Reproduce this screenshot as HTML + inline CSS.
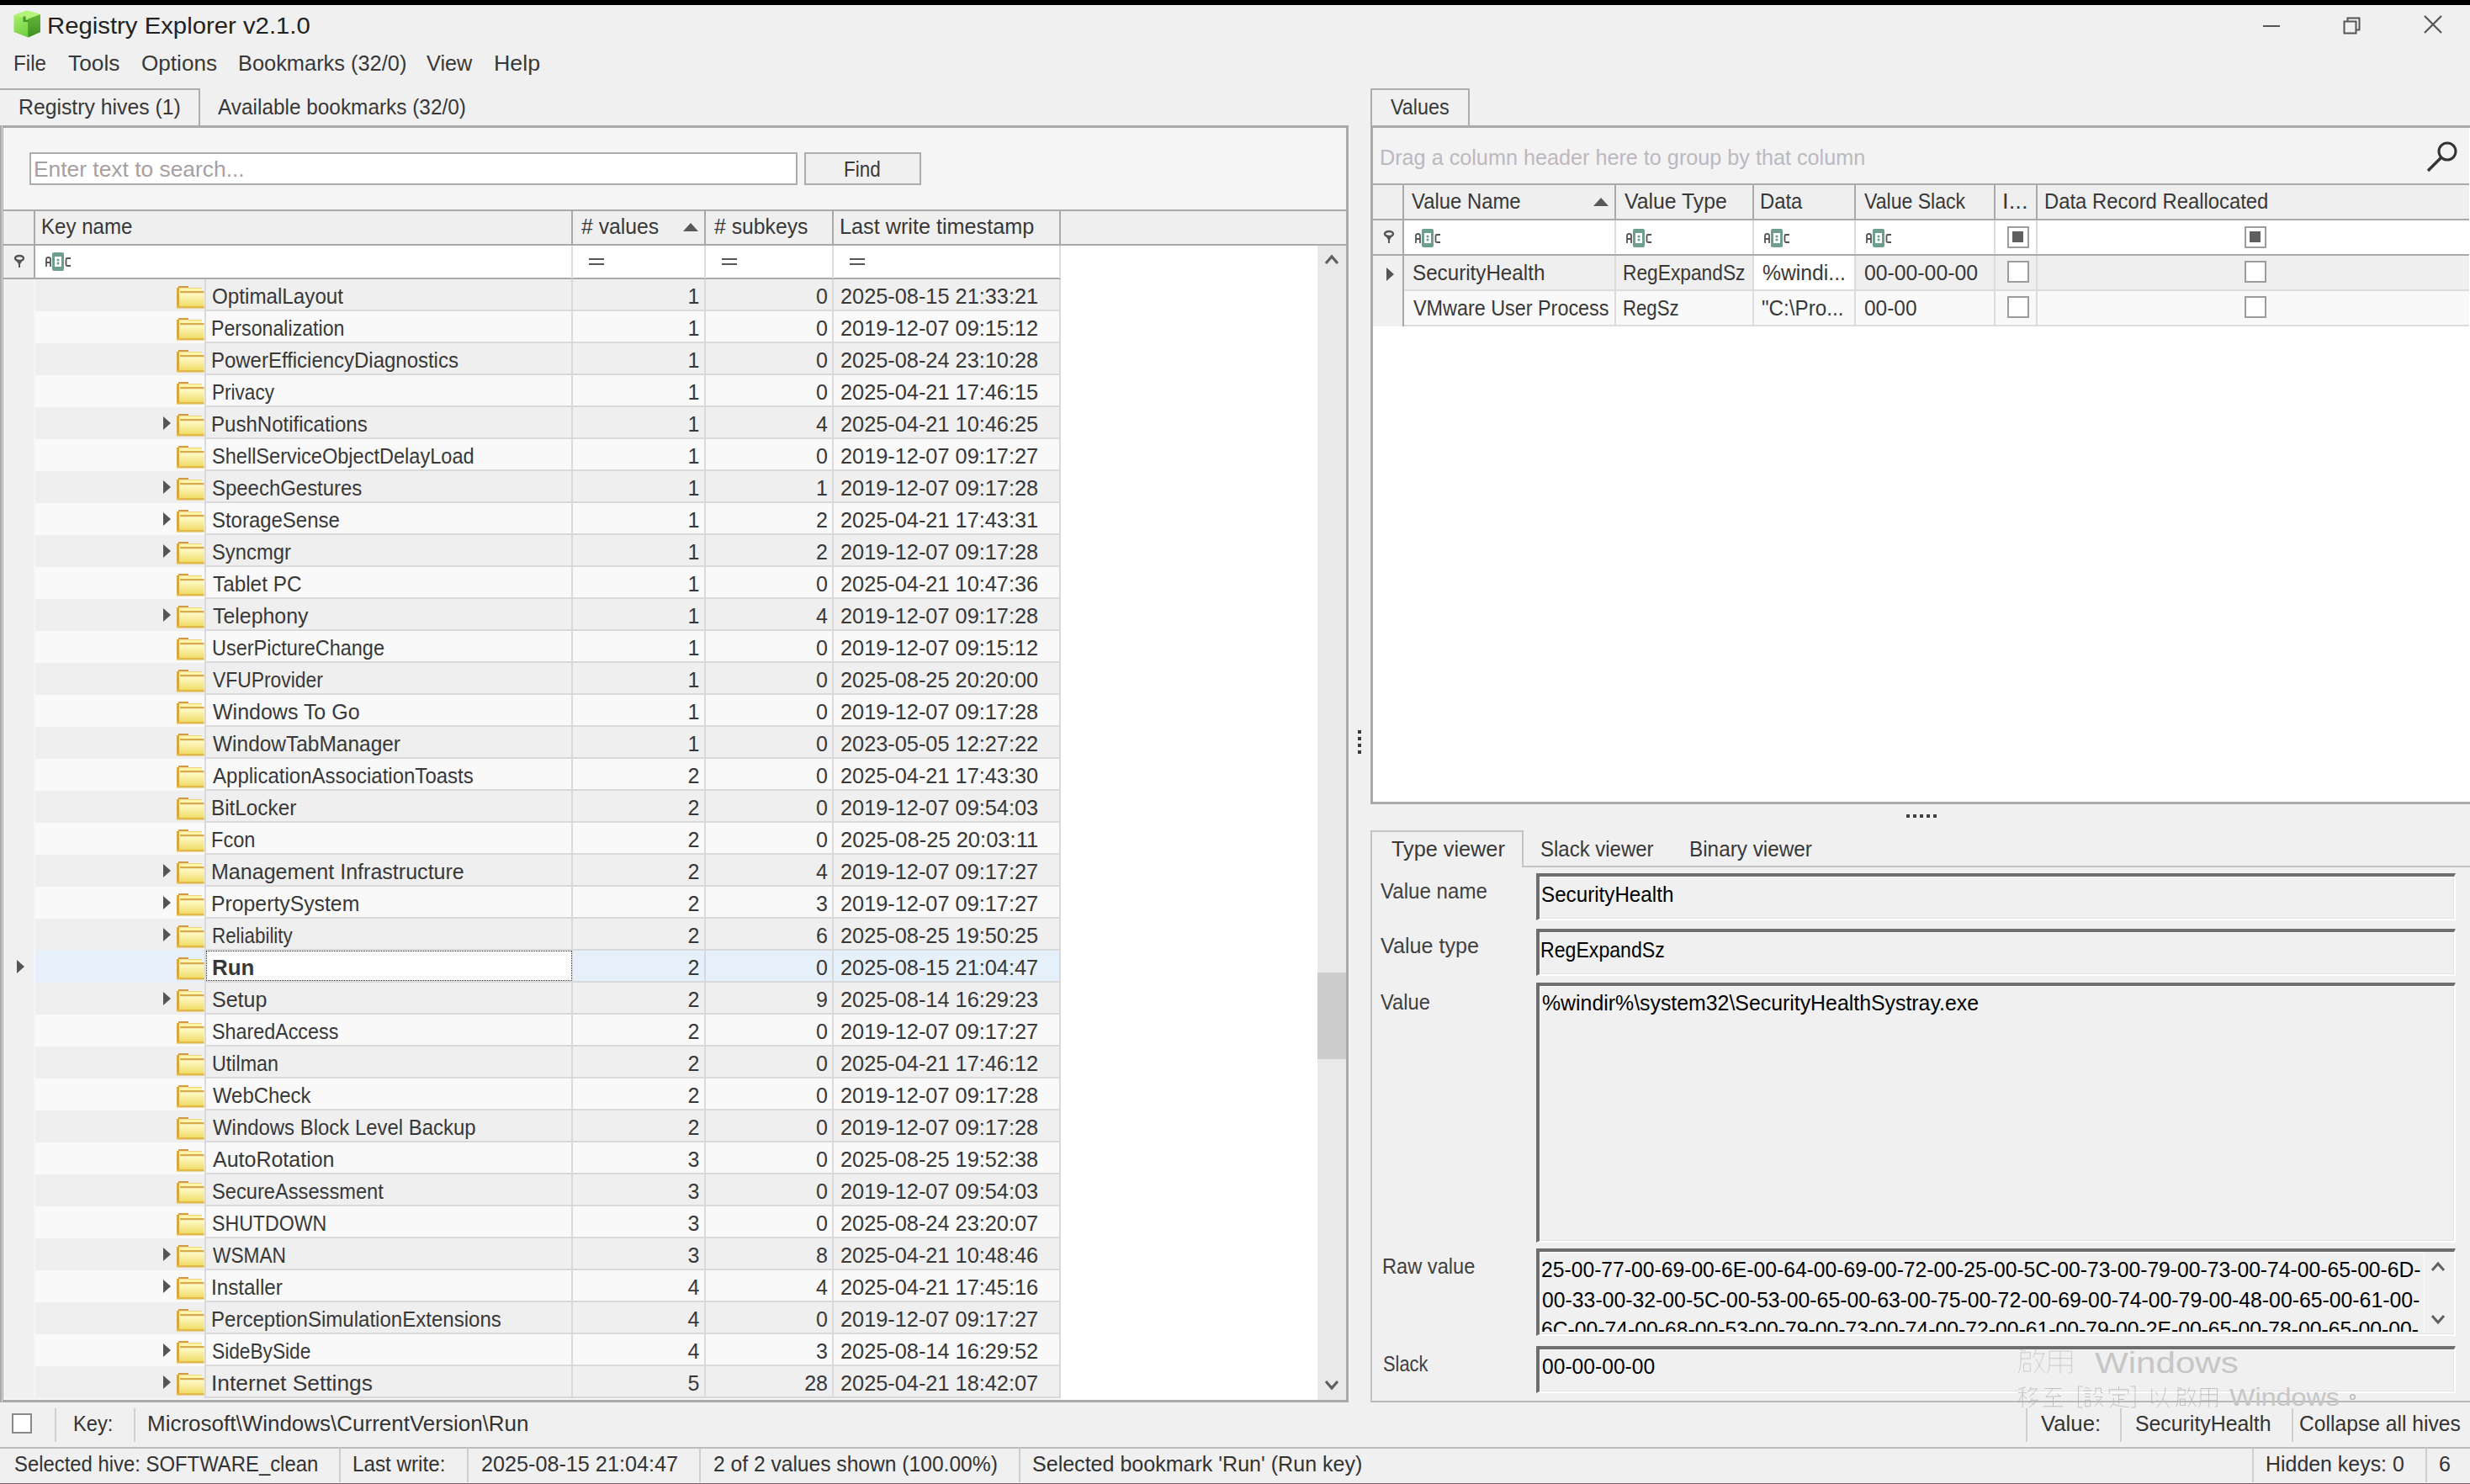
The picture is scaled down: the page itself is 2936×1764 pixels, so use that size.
<!DOCTYPE html>
<html><head><meta charset="utf-8"><title>Registry Explorer</title>
<style>
html,body{margin:0;padding:0;}
body{width:2936px;height:1764px;position:relative;overflow:hidden;background:#f0f0f0;font-family:"Liberation Sans",sans-serif;}
.a{position:absolute;box-sizing:content-box;}
svg.a{overflow:visible;}
.t{position:absolute;white-space:pre;font-family:"Liberation Sans",sans-serif;}
</style></head><body>
<div class="a" style="left:0px;top:0px;width:2936px;height:6px;background:#000;"></div>
<svg class="a" style="left:15px;top:11px;" width="36" height="36" viewBox="0 0 36 36">
<defs><linearGradient id="g1" x1="0" y1="0" x2="0.6" y2="1"><stop offset="0" stop-color="#b0f76a"/><stop offset="1" stop-color="#6cc840"/></linearGradient>
<linearGradient id="g2" x1="0" y1="0" x2="0" y2="1"><stop offset="0" stop-color="#62b838"/><stop offset="1" stop-color="#3f8f25"/></linearGradient></defs>
<path d="M1.5 7 L17 1.5 L33 6 L33 27 L18.5 33.5 L1.5 27 Z" fill="url(#g1)"/>
<path d="M18 11.5 L33 6 L33 27 L18.5 33.5 Z" fill="url(#g2)"/>
<path d="M1.5 7 L17 1.5 L33 6 L18 11.5 Z" fill="#b4f47c"/>
<path d="M12.5 8.5 L15.5 8.5 L15.5 13 L18.5 13 L18.5 15 L12.5 15 Z" fill="#3d8422" opacity="0.85"/>
</svg>
<div class="t " style="left:55.64px;top:15.870000000000001px;font-size:28.5px;line-height:28.5px;color:#222;font-weight:normal;transform:scaleX(1.0286);transform-origin:0 0;">Registry Explorer v2.1.0</div>
<div class="a" style="left:2690px;top:30px;width:20px;height:2px;background:#555;"></div>
<svg class="a" style="left:2784px;top:19px;" width="24" height="24" viewBox="0 0 24 24"><rect x="2.5" y="6.5" width="14" height="14" fill="none" stroke="#555" stroke-width="2"/><path d="M6.5 6.5 V2.5 H20.5 V16.5 H16.5" fill="none" stroke="#555" stroke-width="2"/></svg>
<svg class="a" style="left:2880px;top:17px;" width="24" height="24" viewBox="0 0 24 24"><path d="M2 2 L22 22 M22 2 L2 22" stroke="#555" stroke-width="2.2"/></svg>
<div class="t " style="left:15.66px;top:62.84px;font-size:25px;line-height:25px;color:#383838;font-weight:normal;transform:scaleX(0.9684);transform-origin:0 0;">File</div>
<div class="t " style="left:80.80px;top:62.84px;font-size:25px;line-height:25px;color:#383838;font-weight:normal;transform:scaleX(1.0525);transform-origin:0 0;">Tools</div>
<div class="t " style="left:168.46px;top:62.84px;font-size:25px;line-height:25px;color:#383838;font-weight:normal;transform:scaleX(1.0442);transform-origin:0 0;">Options</div>
<div class="t " style="left:282.77px;top:62.84px;font-size:25px;line-height:25px;color:#383838;font-weight:normal;transform:scaleX(1.0156);transform-origin:0 0;">Bookmarks (32/0)</div>
<div class="t " style="left:507.30px;top:62.84px;font-size:25px;line-height:25px;color:#383838;font-weight:normal;transform:scaleX(1.0095);transform-origin:0 0;">View</div>
<div class="t " style="left:586.86px;top:62.84px;font-size:25px;line-height:25px;color:#383838;font-weight:normal;transform:scaleX(1.0719);transform-origin:0 0;">Help</div>
<div class="a" style="left:0px;top:105px;width:236px;height:46px;border:2px solid #adadad;border-bottom:none;border-left:none;background:#f0f0f0"></div>
<div class="t " style="left:22.32px;top:114.84px;font-size:25px;line-height:25px;color:#383838;font-weight:normal;transform:scaleX(0.9913);transform-origin:0 0;">Registry hives (1)</div>
<div class="t " style="left:259.00px;top:114.84px;font-size:25px;line-height:25px;color:#383838;font-weight:normal;transform:scaleX(0.9750);transform-origin:0 0;">Available bookmarks (32/0)</div>
<div class="a" style="left:0px;top:149px;width:1600px;height:1512px;border:3px solid #a9a9a9;border-left:none;background:#f5f5f5"></div>
<div class="a" style="left:0px;top:149px;width:2px;height:1518px;background:#a9a9a9;"></div>
<div class="a" style="left:2px;top:149px;width:1px;height:1518px;background:#dcdcdc;"></div>
<div class="a" style="left:3px;top:149px;width:1px;height:1518px;background:#a9a9a9;"></div>
<div class="a" style="left:35px;top:181px;width:909px;height:35px;border:2px solid #acacac;background:#fff"></div>
<div class="t " style="left:40.39px;top:188.84px;font-size:25px;line-height:25px;color:#a8a0a0;font-weight:normal;transform:scaleX(1.0549);transform-origin:0 0;">Enter text to search...</div>
<div class="a" style="left:956px;top:181px;width:135px;height:35px;border:2px solid #adadad;background:#f0f0f0"></div>
<div class="t " style="left:1003.21px;top:188.84px;font-size:25px;line-height:25px;color:#383838;font-weight:normal;transform:scaleX(0.8966);transform-origin:0 0;">Find</div>
<div class="a" style="left:4px;top:249px;width:1596px;height:2px;background:#a9a9a9;"></div>
<div class="a" style="left:4px;top:251px;width:1596px;height:40px;background:#efefef;"></div>
<div class="a" style="left:4px;top:290px;width:1596px;height:2px;background:#a9a9a9;"></div>
<div class="a" style="left:40px;top:251px;width:2px;height:40px;background:#a9a9a9;"></div>
<div class="a" style="left:679px;top:251px;width:2px;height:40px;background:#a9a9a9;"></div>
<div class="a" style="left:837px;top:251px;width:2px;height:40px;background:#a9a9a9;"></div>
<div class="a" style="left:989px;top:251px;width:2px;height:40px;background:#a9a9a9;"></div>
<div class="a" style="left:1259px;top:251px;width:2px;height:40px;background:#a9a9a9;"></div>
<div class="t " style="left:49.07px;top:256.84px;font-size:25px;line-height:25px;color:#383838;font-weight:normal;transform:scaleX(0.9639);transform-origin:0 0;">Key name</div>
<div class="t " style="left:691.00px;top:256.84px;font-size:25px;line-height:25px;color:#383838;font-weight:normal;transform:scaleX(0.9901);transform-origin:0 0;"># values</div>
<svg class="a" style="left:812px;top:264px;" width="18" height="12" viewBox="0 0 18 12"><path d="M0 11 L9 1 L18 11 Z" fill="#595959"/></svg>
<div class="t " style="left:849.40px;top:256.84px;font-size:25px;line-height:25px;color:#383838;font-weight:normal;transform:scaleX(0.9896);transform-origin:0 0;"># subkeys</div>
<div class="t " style="left:997.98px;top:256.84px;font-size:25px;line-height:25px;color:#383838;font-weight:normal;transform:scaleX(1.0087);transform-origin:0 0;">Last write timestamp</div>
<div class="a" style="left:4px;top:292px;width:36px;height:39px;background:#f0f0f0;"></div>
<div class="a" style="left:42px;top:292px;width:1219px;height:39px;background:#fff;"></div>
<div class="a" style="left:1261px;top:292px;width:305px;height:1372px;background:#fff;"></div>
<div class="a" style="left:4px;top:330px;width:1257px;height:2px;background:#a9a9a9;"></div>
<div class="a" style="left:40px;top:292px;width:2px;height:39px;background:#a9a9a9;"></div>
<div class="a" style="left:679px;top:292px;width:2px;height:39px;background:#dcdcdc;"></div>
<div class="a" style="left:837px;top:292px;width:2px;height:39px;background:#dcdcdc;"></div>
<div class="a" style="left:989px;top:292px;width:2px;height:39px;background:#dcdcdc;"></div>
<div class="a" style="left:1259px;top:292px;width:2px;height:39px;background:#dcdcdc;"></div>
<svg class="a" style="left:17px;top:303px;" width="12" height="16" viewBox="0 0 12 16"><ellipse cx="6" cy="4" rx="5" ry="3" fill="none" stroke="#555" stroke-width="2.4"/><path d="M2 6 L10 6 L7 11 L7 15 L5 15 L5 11 Z" fill="#555"/></svg>
<svg class="a" style="left:54px;top:300px;" width="32" height="23" viewBox="0 0 32 23"><path d="M1 17 V8 Q1 6 3.5 6 Q6 6 6 8 V17 M1 12 H6" fill="none" stroke="#555" stroke-width="1.8"/><rect x="8" y="0" width="14" height="22" rx="2" fill="#6e9f8c"/><rect x="11" y="5" width="8" height="12" fill="#fff"/><circle cx="15" cy="9" r="1.6" fill="#6e9f8c"/><circle cx="15" cy="13" r="1.6" fill="#6e9f8c"/><path d="M30 7 H26 Q24.5 7 24.5 8.5 V14.5 Q24.5 16 26 16 H30" fill="none" stroke="#555" stroke-width="1.8"/></svg>
<div class="a" style="left:700px;top:307px;width:18px;height:2px;background:#555;"></div>
<div class="a" style="left:700px;top:313px;width:18px;height:2px;background:#555;"></div>
<div class="a" style="left:858px;top:307px;width:18px;height:2px;background:#555;"></div>
<div class="a" style="left:858px;top:313px;width:18px;height:2px;background:#555;"></div>
<div class="a" style="left:1010px;top:307px;width:18px;height:2px;background:#555;"></div>
<div class="a" style="left:1010px;top:313px;width:18px;height:2px;background:#555;"></div>
<div class="a" style="left:42px;top:332px;width:1219px;height:38px;background:#efefef;"></div>
<div class="a" style="left:4px;top:332px;width:36px;height:38px;background:#f0f0f0;"></div>
<div class="a" style="left:243px;top:368px;width:1018px;height:2px;background:#d9d9d9;"></div>
<div class="a" style="left:243px;top:332px;width:2px;height:38px;background:#d9d9d9;"></div>
<div class="a" style="left:679px;top:332px;width:2px;height:38px;background:#d9d9d9;"></div>
<div class="a" style="left:837px;top:332px;width:2px;height:38px;background:#d9d9d9;"></div>
<div class="a" style="left:989px;top:332px;width:2px;height:38px;background:#d9d9d9;"></div>
<div class="a" style="left:1259px;top:332px;width:2px;height:38px;background:#d9d9d9;"></div>
<svg class="a" style="left:210px;top:340px;" width="33" height="27" viewBox="0 0 33 27"><defs><linearGradient id="fg" x1="0" y1="0" x2="0" y2="1"><stop offset="0" stop-color="#fffbc4"/><stop offset="0.45" stop-color="#f8eca0"/><stop offset="1" stop-color="#f0dc62"/></linearGradient></defs>
<rect x="0" y="2" width="3" height="24" fill="#d9a640"/>
<rect x="2" y="0" width="12" height="2.5" fill="#cf9c45"/>
<rect x="14" y="2" width="16" height="2.5" fill="#dcb050"/>
<rect x="3" y="2.5" width="27" height="5" fill="#fff5a8"/>
<rect x="4" y="6" width="28.5" height="2.5" fill="#d8aa4c"/>
<rect x="3" y="8.5" width="29.5" height="16" fill="url(#fg)"/>
<rect x="0" y="24" width="32.5" height="2.5" fill="#e2b84a"/></svg>
<div class="t " style="left:252.33px;top:339.84px;font-size:25px;line-height:25px;color:#383838;font-weight:normal;transform:scaleX(0.9679);transform-origin:0 0;">OptimalLayout</div>
<div class="t" style="right:2104.5px;top:339.84px;font-size:25px;line-height:25px;color:#383838;text-align:right;">1</div>
<div class="t" style="right:1952px;top:339.84px;font-size:25px;line-height:25px;color:#383838;text-align:right;">0</div>
<div class="t " style="left:999.49px;top:339.84px;font-size:25px;line-height:25px;color:#383838;font-weight:normal;transform:scaleX(1.0129);transform-origin:0 0;">2025-08-15 21:33:21</div>
<div class="a" style="left:42px;top:370px;width:1219px;height:38px;background:#f9f9f9;"></div>
<div class="a" style="left:4px;top:370px;width:36px;height:38px;background:#f0f0f0;"></div>
<div class="a" style="left:243px;top:406px;width:1018px;height:2px;background:#d9d9d9;"></div>
<div class="a" style="left:243px;top:370px;width:2px;height:38px;background:#d9d9d9;"></div>
<div class="a" style="left:679px;top:370px;width:2px;height:38px;background:#d9d9d9;"></div>
<div class="a" style="left:837px;top:370px;width:2px;height:38px;background:#d9d9d9;"></div>
<div class="a" style="left:989px;top:370px;width:2px;height:38px;background:#d9d9d9;"></div>
<div class="a" style="left:1259px;top:370px;width:2px;height:38px;background:#d9d9d9;"></div>
<svg class="a" style="left:210px;top:378px;" width="33" height="27" viewBox="0 0 33 27"><defs><linearGradient id="fg" x1="0" y1="0" x2="0" y2="1"><stop offset="0" stop-color="#fffbc4"/><stop offset="0.45" stop-color="#f8eca0"/><stop offset="1" stop-color="#f0dc62"/></linearGradient></defs>
<rect x="0" y="2" width="3" height="24" fill="#d9a640"/>
<rect x="2" y="0" width="12" height="2.5" fill="#cf9c45"/>
<rect x="14" y="2" width="16" height="2.5" fill="#dcb050"/>
<rect x="3" y="2.5" width="27" height="5" fill="#fff5a8"/>
<rect x="4" y="6" width="28.5" height="2.5" fill="#d8aa4c"/>
<rect x="3" y="8.5" width="29.5" height="16" fill="url(#fg)"/>
<rect x="0" y="24" width="32.5" height="2.5" fill="#e2b84a"/></svg>
<div class="t " style="left:251.45px;top:377.84px;font-size:25px;line-height:25px;color:#383838;font-weight:normal;transform:scaleX(0.9272);transform-origin:0 0;">Personalization</div>
<div class="t" style="right:2104.5px;top:377.84px;font-size:25px;line-height:25px;color:#383838;text-align:right;">1</div>
<div class="t" style="right:1952px;top:377.84px;font-size:25px;line-height:25px;color:#383838;text-align:right;">0</div>
<div class="t " style="left:999.49px;top:377.84px;font-size:25px;line-height:25px;color:#383838;font-weight:normal;transform:scaleX(1.0129);transform-origin:0 0;">2019-12-07 09:15:12</div>
<div class="a" style="left:42px;top:408px;width:1219px;height:38px;background:#efefef;"></div>
<div class="a" style="left:4px;top:408px;width:36px;height:38px;background:#f0f0f0;"></div>
<div class="a" style="left:243px;top:444px;width:1018px;height:2px;background:#d9d9d9;"></div>
<div class="a" style="left:243px;top:408px;width:2px;height:38px;background:#d9d9d9;"></div>
<div class="a" style="left:679px;top:408px;width:2px;height:38px;background:#d9d9d9;"></div>
<div class="a" style="left:837px;top:408px;width:2px;height:38px;background:#d9d9d9;"></div>
<div class="a" style="left:989px;top:408px;width:2px;height:38px;background:#d9d9d9;"></div>
<div class="a" style="left:1259px;top:408px;width:2px;height:38px;background:#d9d9d9;"></div>
<svg class="a" style="left:210px;top:416px;" width="33" height="27" viewBox="0 0 33 27"><defs><linearGradient id="fg" x1="0" y1="0" x2="0" y2="1"><stop offset="0" stop-color="#fffbc4"/><stop offset="0.45" stop-color="#f8eca0"/><stop offset="1" stop-color="#f0dc62"/></linearGradient></defs>
<rect x="0" y="2" width="3" height="24" fill="#d9a640"/>
<rect x="2" y="0" width="12" height="2.5" fill="#cf9c45"/>
<rect x="14" y="2" width="16" height="2.5" fill="#dcb050"/>
<rect x="3" y="2.5" width="27" height="5" fill="#fff5a8"/>
<rect x="4" y="6" width="28.5" height="2.5" fill="#d8aa4c"/>
<rect x="3" y="8.5" width="29.5" height="16" fill="url(#fg)"/>
<rect x="0" y="24" width="32.5" height="2.5" fill="#e2b84a"/></svg>
<div class="t " style="left:251.38px;top:415.84px;font-size:25px;line-height:25px;color:#383838;font-weight:normal;transform:scaleX(0.9585);transform-origin:0 0;">PowerEfficiencyDiagnostics</div>
<div class="t" style="right:2104.5px;top:415.84px;font-size:25px;line-height:25px;color:#383838;text-align:right;">1</div>
<div class="t" style="right:1952px;top:415.84px;font-size:25px;line-height:25px;color:#383838;text-align:right;">0</div>
<div class="t " style="left:999.49px;top:415.84px;font-size:25px;line-height:25px;color:#383838;font-weight:normal;transform:scaleX(1.0129);transform-origin:0 0;">2025-08-24 23:10:28</div>
<div class="a" style="left:42px;top:446px;width:1219px;height:38px;background:#f9f9f9;"></div>
<div class="a" style="left:4px;top:446px;width:36px;height:38px;background:#f0f0f0;"></div>
<div class="a" style="left:243px;top:482px;width:1018px;height:2px;background:#d9d9d9;"></div>
<div class="a" style="left:243px;top:446px;width:2px;height:38px;background:#d9d9d9;"></div>
<div class="a" style="left:679px;top:446px;width:2px;height:38px;background:#d9d9d9;"></div>
<div class="a" style="left:837px;top:446px;width:2px;height:38px;background:#d9d9d9;"></div>
<div class="a" style="left:989px;top:446px;width:2px;height:38px;background:#d9d9d9;"></div>
<div class="a" style="left:1259px;top:446px;width:2px;height:38px;background:#d9d9d9;"></div>
<svg class="a" style="left:210px;top:454px;" width="33" height="27" viewBox="0 0 33 27"><defs><linearGradient id="fg" x1="0" y1="0" x2="0" y2="1"><stop offset="0" stop-color="#fffbc4"/><stop offset="0.45" stop-color="#f8eca0"/><stop offset="1" stop-color="#f0dc62"/></linearGradient></defs>
<rect x="0" y="2" width="3" height="24" fill="#d9a640"/>
<rect x="2" y="0" width="12" height="2.5" fill="#cf9c45"/>
<rect x="14" y="2" width="16" height="2.5" fill="#dcb050"/>
<rect x="3" y="2.5" width="27" height="5" fill="#fff5a8"/>
<rect x="4" y="6" width="28.5" height="2.5" fill="#d8aa4c"/>
<rect x="3" y="8.5" width="29.5" height="16" fill="url(#fg)"/>
<rect x="0" y="24" width="32.5" height="2.5" fill="#e2b84a"/></svg>
<div class="t " style="left:251.50px;top:453.84px;font-size:25px;line-height:25px;color:#383838;font-weight:normal;transform:scaleX(0.9023);transform-origin:0 0;">Privacy</div>
<div class="t" style="right:2104.5px;top:453.84px;font-size:25px;line-height:25px;color:#383838;text-align:right;">1</div>
<div class="t" style="right:1952px;top:453.84px;font-size:25px;line-height:25px;color:#383838;text-align:right;">0</div>
<div class="t " style="left:999.49px;top:453.84px;font-size:25px;line-height:25px;color:#383838;font-weight:normal;transform:scaleX(1.0129);transform-origin:0 0;">2025-04-21 17:46:15</div>
<div class="a" style="left:42px;top:484px;width:1219px;height:38px;background:#efefef;"></div>
<div class="a" style="left:4px;top:484px;width:36px;height:38px;background:#f0f0f0;"></div>
<div class="a" style="left:243px;top:520px;width:1018px;height:2px;background:#d9d9d9;"></div>
<div class="a" style="left:243px;top:484px;width:2px;height:38px;background:#d9d9d9;"></div>
<div class="a" style="left:679px;top:484px;width:2px;height:38px;background:#d9d9d9;"></div>
<div class="a" style="left:837px;top:484px;width:2px;height:38px;background:#d9d9d9;"></div>
<div class="a" style="left:989px;top:484px;width:2px;height:38px;background:#d9d9d9;"></div>
<div class="a" style="left:1259px;top:484px;width:2px;height:38px;background:#d9d9d9;"></div>
<svg class="a" style="left:194px;top:495px;" width="9" height="16" viewBox="0 0 9 16"><path d="M0 0 L9 8 L0 16 Z" fill="#555"/></svg>
<svg class="a" style="left:210px;top:492px;" width="33" height="27" viewBox="0 0 33 27"><defs><linearGradient id="fg" x1="0" y1="0" x2="0" y2="1"><stop offset="0" stop-color="#fffbc4"/><stop offset="0.45" stop-color="#f8eca0"/><stop offset="1" stop-color="#f0dc62"/></linearGradient></defs>
<rect x="0" y="2" width="3" height="24" fill="#d9a640"/>
<rect x="2" y="0" width="12" height="2.5" fill="#cf9c45"/>
<rect x="14" y="2" width="16" height="2.5" fill="#dcb050"/>
<rect x="3" y="2.5" width="27" height="5" fill="#fff5a8"/>
<rect x="4" y="6" width="28.5" height="2.5" fill="#d8aa4c"/>
<rect x="3" y="8.5" width="29.5" height="16" fill="url(#fg)"/>
<rect x="0" y="24" width="32.5" height="2.5" fill="#e2b84a"/></svg>
<div class="t " style="left:251.38px;top:491.84px;font-size:25px;line-height:25px;color:#383838;font-weight:normal;transform:scaleX(0.9614);transform-origin:0 0;">PushNotifications</div>
<div class="t" style="right:2104.5px;top:491.84px;font-size:25px;line-height:25px;color:#383838;text-align:right;">1</div>
<div class="t" style="right:1952px;top:491.84px;font-size:25px;line-height:25px;color:#383838;text-align:right;">4</div>
<div class="t " style="left:999.49px;top:491.84px;font-size:25px;line-height:25px;color:#383838;font-weight:normal;transform:scaleX(1.0129);transform-origin:0 0;">2025-04-21 10:46:25</div>
<div class="a" style="left:42px;top:522px;width:1219px;height:38px;background:#f9f9f9;"></div>
<div class="a" style="left:4px;top:522px;width:36px;height:38px;background:#f0f0f0;"></div>
<div class="a" style="left:243px;top:558px;width:1018px;height:2px;background:#d9d9d9;"></div>
<div class="a" style="left:243px;top:522px;width:2px;height:38px;background:#d9d9d9;"></div>
<div class="a" style="left:679px;top:522px;width:2px;height:38px;background:#d9d9d9;"></div>
<div class="a" style="left:837px;top:522px;width:2px;height:38px;background:#d9d9d9;"></div>
<div class="a" style="left:989px;top:522px;width:2px;height:38px;background:#d9d9d9;"></div>
<div class="a" style="left:1259px;top:522px;width:2px;height:38px;background:#d9d9d9;"></div>
<svg class="a" style="left:210px;top:530px;" width="33" height="27" viewBox="0 0 33 27"><defs><linearGradient id="fg" x1="0" y1="0" x2="0" y2="1"><stop offset="0" stop-color="#fffbc4"/><stop offset="0.45" stop-color="#f8eca0"/><stop offset="1" stop-color="#f0dc62"/></linearGradient></defs>
<rect x="0" y="2" width="3" height="24" fill="#d9a640"/>
<rect x="2" y="0" width="12" height="2.5" fill="#cf9c45"/>
<rect x="14" y="2" width="16" height="2.5" fill="#dcb050"/>
<rect x="3" y="2.5" width="27" height="5" fill="#fff5a8"/>
<rect x="4" y="6" width="28.5" height="2.5" fill="#d8aa4c"/>
<rect x="3" y="8.5" width="29.5" height="16" fill="url(#fg)"/>
<rect x="0" y="24" width="32.5" height="2.5" fill="#e2b84a"/></svg>
<div class="t " style="left:252.36px;top:529.84px;font-size:25px;line-height:25px;color:#383838;font-weight:normal;transform:scaleX(0.9421);transform-origin:0 0;">ShellServiceObjectDelayLoad</div>
<div class="t" style="right:2104.5px;top:529.84px;font-size:25px;line-height:25px;color:#383838;text-align:right;">1</div>
<div class="t" style="right:1952px;top:529.84px;font-size:25px;line-height:25px;color:#383838;text-align:right;">0</div>
<div class="t " style="left:999.49px;top:529.84px;font-size:25px;line-height:25px;color:#383838;font-weight:normal;transform:scaleX(1.0129);transform-origin:0 0;">2019-12-07 09:17:27</div>
<div class="a" style="left:42px;top:560px;width:1219px;height:38px;background:#efefef;"></div>
<div class="a" style="left:4px;top:560px;width:36px;height:38px;background:#f0f0f0;"></div>
<div class="a" style="left:243px;top:596px;width:1018px;height:2px;background:#d9d9d9;"></div>
<div class="a" style="left:243px;top:560px;width:2px;height:38px;background:#d9d9d9;"></div>
<div class="a" style="left:679px;top:560px;width:2px;height:38px;background:#d9d9d9;"></div>
<div class="a" style="left:837px;top:560px;width:2px;height:38px;background:#d9d9d9;"></div>
<div class="a" style="left:989px;top:560px;width:2px;height:38px;background:#d9d9d9;"></div>
<div class="a" style="left:1259px;top:560px;width:2px;height:38px;background:#d9d9d9;"></div>
<svg class="a" style="left:194px;top:571px;" width="9" height="16" viewBox="0 0 9 16"><path d="M0 0 L9 8 L0 16 Z" fill="#555"/></svg>
<svg class="a" style="left:210px;top:568px;" width="33" height="27" viewBox="0 0 33 27"><defs><linearGradient id="fg" x1="0" y1="0" x2="0" y2="1"><stop offset="0" stop-color="#fffbc4"/><stop offset="0.45" stop-color="#f8eca0"/><stop offset="1" stop-color="#f0dc62"/></linearGradient></defs>
<rect x="0" y="2" width="3" height="24" fill="#d9a640"/>
<rect x="2" y="0" width="12" height="2.5" fill="#cf9c45"/>
<rect x="14" y="2" width="16" height="2.5" fill="#dcb050"/>
<rect x="3" y="2.5" width="27" height="5" fill="#fff5a8"/>
<rect x="4" y="6" width="28.5" height="2.5" fill="#d8aa4c"/>
<rect x="3" y="8.5" width="29.5" height="16" fill="url(#fg)"/>
<rect x="0" y="24" width="32.5" height="2.5" fill="#e2b84a"/></svg>
<div class="t " style="left:252.34px;top:567.84px;font-size:25px;line-height:25px;color:#383838;font-weight:normal;transform:scaleX(0.9577);transform-origin:0 0;">SpeechGestures</div>
<div class="t" style="right:2104.5px;top:567.84px;font-size:25px;line-height:25px;color:#383838;text-align:right;">1</div>
<div class="t" style="right:1952px;top:567.84px;font-size:25px;line-height:25px;color:#383838;text-align:right;">1</div>
<div class="t " style="left:999.49px;top:567.84px;font-size:25px;line-height:25px;color:#383838;font-weight:normal;transform:scaleX(1.0129);transform-origin:0 0;">2019-12-07 09:17:28</div>
<div class="a" style="left:42px;top:598px;width:1219px;height:38px;background:#f9f9f9;"></div>
<div class="a" style="left:4px;top:598px;width:36px;height:38px;background:#f0f0f0;"></div>
<div class="a" style="left:243px;top:634px;width:1018px;height:2px;background:#d9d9d9;"></div>
<div class="a" style="left:243px;top:598px;width:2px;height:38px;background:#d9d9d9;"></div>
<div class="a" style="left:679px;top:598px;width:2px;height:38px;background:#d9d9d9;"></div>
<div class="a" style="left:837px;top:598px;width:2px;height:38px;background:#d9d9d9;"></div>
<div class="a" style="left:989px;top:598px;width:2px;height:38px;background:#d9d9d9;"></div>
<div class="a" style="left:1259px;top:598px;width:2px;height:38px;background:#d9d9d9;"></div>
<svg class="a" style="left:194px;top:609px;" width="9" height="16" viewBox="0 0 9 16"><path d="M0 0 L9 8 L0 16 Z" fill="#555"/></svg>
<svg class="a" style="left:210px;top:606px;" width="33" height="27" viewBox="0 0 33 27"><defs><linearGradient id="fg" x1="0" y1="0" x2="0" y2="1"><stop offset="0" stop-color="#fffbc4"/><stop offset="0.45" stop-color="#f8eca0"/><stop offset="1" stop-color="#f0dc62"/></linearGradient></defs>
<rect x="0" y="2" width="3" height="24" fill="#d9a640"/>
<rect x="2" y="0" width="12" height="2.5" fill="#cf9c45"/>
<rect x="14" y="2" width="16" height="2.5" fill="#dcb050"/>
<rect x="3" y="2.5" width="27" height="5" fill="#fff5a8"/>
<rect x="4" y="6" width="28.5" height="2.5" fill="#d8aa4c"/>
<rect x="3" y="8.5" width="29.5" height="16" fill="url(#fg)"/>
<rect x="0" y="24" width="32.5" height="2.5" fill="#e2b84a"/></svg>
<div class="t " style="left:252.34px;top:605.84px;font-size:25px;line-height:25px;color:#383838;font-weight:normal;transform:scaleX(0.9576);transform-origin:0 0;">StorageSense</div>
<div class="t" style="right:2104.5px;top:605.84px;font-size:25px;line-height:25px;color:#383838;text-align:right;">1</div>
<div class="t" style="right:1952px;top:605.84px;font-size:25px;line-height:25px;color:#383838;text-align:right;">2</div>
<div class="t " style="left:999.49px;top:605.84px;font-size:25px;line-height:25px;color:#383838;font-weight:normal;transform:scaleX(1.0129);transform-origin:0 0;">2025-04-21 17:43:31</div>
<div class="a" style="left:42px;top:636px;width:1219px;height:38px;background:#efefef;"></div>
<div class="a" style="left:4px;top:636px;width:36px;height:38px;background:#f0f0f0;"></div>
<div class="a" style="left:243px;top:672px;width:1018px;height:2px;background:#d9d9d9;"></div>
<div class="a" style="left:243px;top:636px;width:2px;height:38px;background:#d9d9d9;"></div>
<div class="a" style="left:679px;top:636px;width:2px;height:38px;background:#d9d9d9;"></div>
<div class="a" style="left:837px;top:636px;width:2px;height:38px;background:#d9d9d9;"></div>
<div class="a" style="left:989px;top:636px;width:2px;height:38px;background:#d9d9d9;"></div>
<div class="a" style="left:1259px;top:636px;width:2px;height:38px;background:#d9d9d9;"></div>
<svg class="a" style="left:194px;top:647px;" width="9" height="16" viewBox="0 0 9 16"><path d="M0 0 L9 8 L0 16 Z" fill="#555"/></svg>
<svg class="a" style="left:210px;top:644px;" width="33" height="27" viewBox="0 0 33 27"><defs><linearGradient id="fg" x1="0" y1="0" x2="0" y2="1"><stop offset="0" stop-color="#fffbc4"/><stop offset="0.45" stop-color="#f8eca0"/><stop offset="1" stop-color="#f0dc62"/></linearGradient></defs>
<rect x="0" y="2" width="3" height="24" fill="#d9a640"/>
<rect x="2" y="0" width="12" height="2.5" fill="#cf9c45"/>
<rect x="14" y="2" width="16" height="2.5" fill="#dcb050"/>
<rect x="3" y="2.5" width="27" height="5" fill="#fff5a8"/>
<rect x="4" y="6" width="28.5" height="2.5" fill="#d8aa4c"/>
<rect x="3" y="8.5" width="29.5" height="16" fill="url(#fg)"/>
<rect x="0" y="24" width="32.5" height="2.5" fill="#e2b84a"/></svg>
<div class="t " style="left:252.35px;top:643.84px;font-size:25px;line-height:25px;color:#383838;font-weight:normal;transform:scaleX(0.9516);transform-origin:0 0;">Syncmgr</div>
<div class="t" style="right:2104.5px;top:643.84px;font-size:25px;line-height:25px;color:#383838;text-align:right;">1</div>
<div class="t" style="right:1952px;top:643.84px;font-size:25px;line-height:25px;color:#383838;text-align:right;">2</div>
<div class="t " style="left:999.49px;top:643.84px;font-size:25px;line-height:25px;color:#383838;font-weight:normal;transform:scaleX(1.0129);transform-origin:0 0;">2019-12-07 09:17:28</div>
<div class="a" style="left:42px;top:674px;width:1219px;height:38px;background:#f9f9f9;"></div>
<div class="a" style="left:4px;top:674px;width:36px;height:38px;background:#f0f0f0;"></div>
<div class="a" style="left:243px;top:710px;width:1018px;height:2px;background:#d9d9d9;"></div>
<div class="a" style="left:243px;top:674px;width:2px;height:38px;background:#d9d9d9;"></div>
<div class="a" style="left:679px;top:674px;width:2px;height:38px;background:#d9d9d9;"></div>
<div class="a" style="left:837px;top:674px;width:2px;height:38px;background:#d9d9d9;"></div>
<div class="a" style="left:989px;top:674px;width:2px;height:38px;background:#d9d9d9;"></div>
<div class="a" style="left:1259px;top:674px;width:2px;height:38px;background:#d9d9d9;"></div>
<svg class="a" style="left:210px;top:682px;" width="33" height="27" viewBox="0 0 33 27"><defs><linearGradient id="fg" x1="0" y1="0" x2="0" y2="1"><stop offset="0" stop-color="#fffbc4"/><stop offset="0.45" stop-color="#f8eca0"/><stop offset="1" stop-color="#f0dc62"/></linearGradient></defs>
<rect x="0" y="2" width="3" height="24" fill="#d9a640"/>
<rect x="2" y="0" width="12" height="2.5" fill="#cf9c45"/>
<rect x="14" y="2" width="16" height="2.5" fill="#dcb050"/>
<rect x="3" y="2.5" width="27" height="5" fill="#fff5a8"/>
<rect x="4" y="6" width="28.5" height="2.5" fill="#d8aa4c"/>
<rect x="3" y="8.5" width="29.5" height="16" fill="url(#fg)"/>
<rect x="0" y="24" width="32.5" height="2.5" fill="#e2b84a"/></svg>
<div class="t " style="left:253.30px;top:681.84px;font-size:25px;line-height:25px;color:#383838;font-weight:normal;transform:scaleX(0.9729);transform-origin:0 0;">Tablet PC</div>
<div class="t" style="right:2104.5px;top:681.84px;font-size:25px;line-height:25px;color:#383838;text-align:right;">1</div>
<div class="t" style="right:1952px;top:681.84px;font-size:25px;line-height:25px;color:#383838;text-align:right;">0</div>
<div class="t " style="left:999.49px;top:681.84px;font-size:25px;line-height:25px;color:#383838;font-weight:normal;transform:scaleX(1.0129);transform-origin:0 0;">2025-04-21 10:47:36</div>
<div class="a" style="left:42px;top:712px;width:1219px;height:38px;background:#efefef;"></div>
<div class="a" style="left:4px;top:712px;width:36px;height:38px;background:#f0f0f0;"></div>
<div class="a" style="left:243px;top:748px;width:1018px;height:2px;background:#d9d9d9;"></div>
<div class="a" style="left:243px;top:712px;width:2px;height:38px;background:#d9d9d9;"></div>
<div class="a" style="left:679px;top:712px;width:2px;height:38px;background:#d9d9d9;"></div>
<div class="a" style="left:837px;top:712px;width:2px;height:38px;background:#d9d9d9;"></div>
<div class="a" style="left:989px;top:712px;width:2px;height:38px;background:#d9d9d9;"></div>
<div class="a" style="left:1259px;top:712px;width:2px;height:38px;background:#d9d9d9;"></div>
<svg class="a" style="left:194px;top:723px;" width="9" height="16" viewBox="0 0 9 16"><path d="M0 0 L9 8 L0 16 Z" fill="#555"/></svg>
<svg class="a" style="left:210px;top:720px;" width="33" height="27" viewBox="0 0 33 27"><defs><linearGradient id="fg" x1="0" y1="0" x2="0" y2="1"><stop offset="0" stop-color="#fffbc4"/><stop offset="0.45" stop-color="#f8eca0"/><stop offset="1" stop-color="#f0dc62"/></linearGradient></defs>
<rect x="0" y="2" width="3" height="24" fill="#d9a640"/>
<rect x="2" y="0" width="12" height="2.5" fill="#cf9c45"/>
<rect x="14" y="2" width="16" height="2.5" fill="#dcb050"/>
<rect x="3" y="2.5" width="27" height="5" fill="#fff5a8"/>
<rect x="4" y="6" width="28.5" height="2.5" fill="#d8aa4c"/>
<rect x="3" y="8.5" width="29.5" height="16" fill="url(#fg)"/>
<rect x="0" y="24" width="32.5" height="2.5" fill="#e2b84a"/></svg>
<div class="t " style="left:253.30px;top:719.84px;font-size:25px;line-height:25px;color:#383838;font-weight:normal;transform:scaleX(0.9950);transform-origin:0 0;">Telephony</div>
<div class="t" style="right:2104.5px;top:719.84px;font-size:25px;line-height:25px;color:#383838;text-align:right;">1</div>
<div class="t" style="right:1952px;top:719.84px;font-size:25px;line-height:25px;color:#383838;text-align:right;">4</div>
<div class="t " style="left:999.49px;top:719.84px;font-size:25px;line-height:25px;color:#383838;font-weight:normal;transform:scaleX(1.0129);transform-origin:0 0;">2019-12-07 09:17:28</div>
<div class="a" style="left:42px;top:750px;width:1219px;height:38px;background:#f9f9f9;"></div>
<div class="a" style="left:4px;top:750px;width:36px;height:38px;background:#f0f0f0;"></div>
<div class="a" style="left:243px;top:786px;width:1018px;height:2px;background:#d9d9d9;"></div>
<div class="a" style="left:243px;top:750px;width:2px;height:38px;background:#d9d9d9;"></div>
<div class="a" style="left:679px;top:750px;width:2px;height:38px;background:#d9d9d9;"></div>
<div class="a" style="left:837px;top:750px;width:2px;height:38px;background:#d9d9d9;"></div>
<div class="a" style="left:989px;top:750px;width:2px;height:38px;background:#d9d9d9;"></div>
<div class="a" style="left:1259px;top:750px;width:2px;height:38px;background:#d9d9d9;"></div>
<svg class="a" style="left:210px;top:758px;" width="33" height="27" viewBox="0 0 33 27"><defs><linearGradient id="fg" x1="0" y1="0" x2="0" y2="1"><stop offset="0" stop-color="#fffbc4"/><stop offset="0.45" stop-color="#f8eca0"/><stop offset="1" stop-color="#f0dc62"/></linearGradient></defs>
<rect x="0" y="2" width="3" height="24" fill="#d9a640"/>
<rect x="2" y="0" width="12" height="2.5" fill="#cf9c45"/>
<rect x="14" y="2" width="16" height="2.5" fill="#dcb050"/>
<rect x="3" y="2.5" width="27" height="5" fill="#fff5a8"/>
<rect x="4" y="6" width="28.5" height="2.5" fill="#d8aa4c"/>
<rect x="3" y="8.5" width="29.5" height="16" fill="url(#fg)"/>
<rect x="0" y="24" width="32.5" height="2.5" fill="#e2b84a"/></svg>
<div class="t " style="left:252.36px;top:757.84px;font-size:25px;line-height:25px;color:#383838;font-weight:normal;transform:scaleX(0.9396);transform-origin:0 0;">UserPictureChange</div>
<div class="t" style="right:2104.5px;top:757.84px;font-size:25px;line-height:25px;color:#383838;text-align:right;">1</div>
<div class="t" style="right:1952px;top:757.84px;font-size:25px;line-height:25px;color:#383838;text-align:right;">0</div>
<div class="t " style="left:999.49px;top:757.84px;font-size:25px;line-height:25px;color:#383838;font-weight:normal;transform:scaleX(1.0129);transform-origin:0 0;">2019-12-07 09:15:12</div>
<div class="a" style="left:42px;top:788px;width:1219px;height:38px;background:#efefef;"></div>
<div class="a" style="left:4px;top:788px;width:36px;height:38px;background:#f0f0f0;"></div>
<div class="a" style="left:243px;top:824px;width:1018px;height:2px;background:#d9d9d9;"></div>
<div class="a" style="left:243px;top:788px;width:2px;height:38px;background:#d9d9d9;"></div>
<div class="a" style="left:679px;top:788px;width:2px;height:38px;background:#d9d9d9;"></div>
<div class="a" style="left:837px;top:788px;width:2px;height:38px;background:#d9d9d9;"></div>
<div class="a" style="left:989px;top:788px;width:2px;height:38px;background:#d9d9d9;"></div>
<div class="a" style="left:1259px;top:788px;width:2px;height:38px;background:#d9d9d9;"></div>
<svg class="a" style="left:210px;top:796px;" width="33" height="27" viewBox="0 0 33 27"><defs><linearGradient id="fg" x1="0" y1="0" x2="0" y2="1"><stop offset="0" stop-color="#fffbc4"/><stop offset="0.45" stop-color="#f8eca0"/><stop offset="1" stop-color="#f0dc62"/></linearGradient></defs>
<rect x="0" y="2" width="3" height="24" fill="#d9a640"/>
<rect x="2" y="0" width="12" height="2.5" fill="#cf9c45"/>
<rect x="14" y="2" width="16" height="2.5" fill="#dcb050"/>
<rect x="3" y="2.5" width="27" height="5" fill="#fff5a8"/>
<rect x="4" y="6" width="28.5" height="2.5" fill="#d8aa4c"/>
<rect x="3" y="8.5" width="29.5" height="16" fill="url(#fg)"/>
<rect x="0" y="24" width="32.5" height="2.5" fill="#e2b84a"/></svg>
<div class="t " style="left:253.30px;top:795.84px;font-size:25px;line-height:25px;color:#383838;font-weight:normal;transform:scaleX(0.9148);transform-origin:0 0;">VFUProvider</div>
<div class="t" style="right:2104.5px;top:795.84px;font-size:25px;line-height:25px;color:#383838;text-align:right;">1</div>
<div class="t" style="right:1952px;top:795.84px;font-size:25px;line-height:25px;color:#383838;text-align:right;">0</div>
<div class="t " style="left:999.49px;top:795.84px;font-size:25px;line-height:25px;color:#383838;font-weight:normal;transform:scaleX(1.0129);transform-origin:0 0;">2025-08-25 20:20:00</div>
<div class="a" style="left:42px;top:826px;width:1219px;height:38px;background:#f9f9f9;"></div>
<div class="a" style="left:4px;top:826px;width:36px;height:38px;background:#f0f0f0;"></div>
<div class="a" style="left:243px;top:862px;width:1018px;height:2px;background:#d9d9d9;"></div>
<div class="a" style="left:243px;top:826px;width:2px;height:38px;background:#d9d9d9;"></div>
<div class="a" style="left:679px;top:826px;width:2px;height:38px;background:#d9d9d9;"></div>
<div class="a" style="left:837px;top:826px;width:2px;height:38px;background:#d9d9d9;"></div>
<div class="a" style="left:989px;top:826px;width:2px;height:38px;background:#d9d9d9;"></div>
<div class="a" style="left:1259px;top:826px;width:2px;height:38px;background:#d9d9d9;"></div>
<svg class="a" style="left:210px;top:834px;" width="33" height="27" viewBox="0 0 33 27"><defs><linearGradient id="fg" x1="0" y1="0" x2="0" y2="1"><stop offset="0" stop-color="#fffbc4"/><stop offset="0.45" stop-color="#f8eca0"/><stop offset="1" stop-color="#f0dc62"/></linearGradient></defs>
<rect x="0" y="2" width="3" height="24" fill="#d9a640"/>
<rect x="2" y="0" width="12" height="2.5" fill="#cf9c45"/>
<rect x="14" y="2" width="16" height="2.5" fill="#dcb050"/>
<rect x="3" y="2.5" width="27" height="5" fill="#fff5a8"/>
<rect x="4" y="6" width="28.5" height="2.5" fill="#d8aa4c"/>
<rect x="3" y="8.5" width="29.5" height="16" fill="url(#fg)"/>
<rect x="0" y="24" width="32.5" height="2.5" fill="#e2b84a"/></svg>
<div class="t " style="left:253.30px;top:833.84px;font-size:25px;line-height:25px;color:#383838;font-weight:normal;transform:scaleX(0.9997);transform-origin:0 0;">Windows To Go</div>
<div class="t" style="right:2104.5px;top:833.84px;font-size:25px;line-height:25px;color:#383838;text-align:right;">1</div>
<div class="t" style="right:1952px;top:833.84px;font-size:25px;line-height:25px;color:#383838;text-align:right;">0</div>
<div class="t " style="left:999.49px;top:833.84px;font-size:25px;line-height:25px;color:#383838;font-weight:normal;transform:scaleX(1.0129);transform-origin:0 0;">2019-12-07 09:17:28</div>
<div class="a" style="left:42px;top:864px;width:1219px;height:38px;background:#efefef;"></div>
<div class="a" style="left:4px;top:864px;width:36px;height:38px;background:#f0f0f0;"></div>
<div class="a" style="left:243px;top:900px;width:1018px;height:2px;background:#d9d9d9;"></div>
<div class="a" style="left:243px;top:864px;width:2px;height:38px;background:#d9d9d9;"></div>
<div class="a" style="left:679px;top:864px;width:2px;height:38px;background:#d9d9d9;"></div>
<div class="a" style="left:837px;top:864px;width:2px;height:38px;background:#d9d9d9;"></div>
<div class="a" style="left:989px;top:864px;width:2px;height:38px;background:#d9d9d9;"></div>
<div class="a" style="left:1259px;top:864px;width:2px;height:38px;background:#d9d9d9;"></div>
<svg class="a" style="left:210px;top:872px;" width="33" height="27" viewBox="0 0 33 27"><defs><linearGradient id="fg" x1="0" y1="0" x2="0" y2="1"><stop offset="0" stop-color="#fffbc4"/><stop offset="0.45" stop-color="#f8eca0"/><stop offset="1" stop-color="#f0dc62"/></linearGradient></defs>
<rect x="0" y="2" width="3" height="24" fill="#d9a640"/>
<rect x="2" y="0" width="12" height="2.5" fill="#cf9c45"/>
<rect x="14" y="2" width="16" height="2.5" fill="#dcb050"/>
<rect x="3" y="2.5" width="27" height="5" fill="#fff5a8"/>
<rect x="4" y="6" width="28.5" height="2.5" fill="#d8aa4c"/>
<rect x="3" y="8.5" width="29.5" height="16" fill="url(#fg)"/>
<rect x="0" y="24" width="32.5" height="2.5" fill="#e2b84a"/></svg>
<div class="t " style="left:253.30px;top:871.84px;font-size:25px;line-height:25px;color:#383838;font-weight:normal;transform:scaleX(0.9786);transform-origin:0 0;">WindowTabManager</div>
<div class="t" style="right:2104.5px;top:871.84px;font-size:25px;line-height:25px;color:#383838;text-align:right;">1</div>
<div class="t" style="right:1952px;top:871.84px;font-size:25px;line-height:25px;color:#383838;text-align:right;">0</div>
<div class="t " style="left:999.49px;top:871.84px;font-size:25px;line-height:25px;color:#383838;font-weight:normal;transform:scaleX(1.0129);transform-origin:0 0;">2023-05-05 12:27:22</div>
<div class="a" style="left:42px;top:902px;width:1219px;height:38px;background:#f9f9f9;"></div>
<div class="a" style="left:4px;top:902px;width:36px;height:38px;background:#f0f0f0;"></div>
<div class="a" style="left:243px;top:938px;width:1018px;height:2px;background:#d9d9d9;"></div>
<div class="a" style="left:243px;top:902px;width:2px;height:38px;background:#d9d9d9;"></div>
<div class="a" style="left:679px;top:902px;width:2px;height:38px;background:#d9d9d9;"></div>
<div class="a" style="left:837px;top:902px;width:2px;height:38px;background:#d9d9d9;"></div>
<div class="a" style="left:989px;top:902px;width:2px;height:38px;background:#d9d9d9;"></div>
<div class="a" style="left:1259px;top:902px;width:2px;height:38px;background:#d9d9d9;"></div>
<svg class="a" style="left:210px;top:910px;" width="33" height="27" viewBox="0 0 33 27"><defs><linearGradient id="fg" x1="0" y1="0" x2="0" y2="1"><stop offset="0" stop-color="#fffbc4"/><stop offset="0.45" stop-color="#f8eca0"/><stop offset="1" stop-color="#f0dc62"/></linearGradient></defs>
<rect x="0" y="2" width="3" height="24" fill="#d9a640"/>
<rect x="2" y="0" width="12" height="2.5" fill="#cf9c45"/>
<rect x="14" y="2" width="16" height="2.5" fill="#dcb050"/>
<rect x="3" y="2.5" width="27" height="5" fill="#fff5a8"/>
<rect x="4" y="6" width="28.5" height="2.5" fill="#d8aa4c"/>
<rect x="3" y="8.5" width="29.5" height="16" fill="url(#fg)"/>
<rect x="0" y="24" width="32.5" height="2.5" fill="#e2b84a"/></svg>
<div class="t " style="left:253.30px;top:909.84px;font-size:25px;line-height:25px;color:#383838;font-weight:normal;transform:scaleX(0.9609);transform-origin:0 0;">ApplicationAssociationToasts</div>
<div class="t" style="right:2104.5px;top:909.84px;font-size:25px;line-height:25px;color:#383838;text-align:right;">2</div>
<div class="t" style="right:1952px;top:909.84px;font-size:25px;line-height:25px;color:#383838;text-align:right;">0</div>
<div class="t " style="left:999.49px;top:909.84px;font-size:25px;line-height:25px;color:#383838;font-weight:normal;transform:scaleX(1.0129);transform-origin:0 0;">2025-04-21 17:43:30</div>
<div class="a" style="left:42px;top:940px;width:1219px;height:38px;background:#efefef;"></div>
<div class="a" style="left:4px;top:940px;width:36px;height:38px;background:#f0f0f0;"></div>
<div class="a" style="left:243px;top:976px;width:1018px;height:2px;background:#d9d9d9;"></div>
<div class="a" style="left:243px;top:940px;width:2px;height:38px;background:#d9d9d9;"></div>
<div class="a" style="left:679px;top:940px;width:2px;height:38px;background:#d9d9d9;"></div>
<div class="a" style="left:837px;top:940px;width:2px;height:38px;background:#d9d9d9;"></div>
<div class="a" style="left:989px;top:940px;width:2px;height:38px;background:#d9d9d9;"></div>
<div class="a" style="left:1259px;top:940px;width:2px;height:38px;background:#d9d9d9;"></div>
<svg class="a" style="left:210px;top:948px;" width="33" height="27" viewBox="0 0 33 27"><defs><linearGradient id="fg" x1="0" y1="0" x2="0" y2="1"><stop offset="0" stop-color="#fffbc4"/><stop offset="0.45" stop-color="#f8eca0"/><stop offset="1" stop-color="#f0dc62"/></linearGradient></defs>
<rect x="0" y="2" width="3" height="24" fill="#d9a640"/>
<rect x="2" y="0" width="12" height="2.5" fill="#cf9c45"/>
<rect x="14" y="2" width="16" height="2.5" fill="#dcb050"/>
<rect x="3" y="2.5" width="27" height="5" fill="#fff5a8"/>
<rect x="4" y="6" width="28.5" height="2.5" fill="#d8aa4c"/>
<rect x="3" y="8.5" width="29.5" height="16" fill="url(#fg)"/>
<rect x="0" y="24" width="32.5" height="2.5" fill="#e2b84a"/></svg>
<div class="t " style="left:251.36px;top:947.84px;font-size:25px;line-height:25px;color:#383838;font-weight:normal;transform:scaleX(0.9717);transform-origin:0 0;">BitLocker</div>
<div class="t" style="right:2104.5px;top:947.84px;font-size:25px;line-height:25px;color:#383838;text-align:right;">2</div>
<div class="t" style="right:1952px;top:947.84px;font-size:25px;line-height:25px;color:#383838;text-align:right;">0</div>
<div class="t " style="left:999.49px;top:947.84px;font-size:25px;line-height:25px;color:#383838;font-weight:normal;transform:scaleX(1.0129);transform-origin:0 0;">2019-12-07 09:54:03</div>
<div class="a" style="left:42px;top:978px;width:1219px;height:38px;background:#f9f9f9;"></div>
<div class="a" style="left:4px;top:978px;width:36px;height:38px;background:#f0f0f0;"></div>
<div class="a" style="left:243px;top:1014px;width:1018px;height:2px;background:#d9d9d9;"></div>
<div class="a" style="left:243px;top:978px;width:2px;height:38px;background:#d9d9d9;"></div>
<div class="a" style="left:679px;top:978px;width:2px;height:38px;background:#d9d9d9;"></div>
<div class="a" style="left:837px;top:978px;width:2px;height:38px;background:#d9d9d9;"></div>
<div class="a" style="left:989px;top:978px;width:2px;height:38px;background:#d9d9d9;"></div>
<div class="a" style="left:1259px;top:978px;width:2px;height:38px;background:#d9d9d9;"></div>
<svg class="a" style="left:210px;top:986px;" width="33" height="27" viewBox="0 0 33 27"><defs><linearGradient id="fg" x1="0" y1="0" x2="0" y2="1"><stop offset="0" stop-color="#fffbc4"/><stop offset="0.45" stop-color="#f8eca0"/><stop offset="1" stop-color="#f0dc62"/></linearGradient></defs>
<rect x="0" y="2" width="3" height="24" fill="#d9a640"/>
<rect x="2" y="0" width="12" height="2.5" fill="#cf9c45"/>
<rect x="14" y="2" width="16" height="2.5" fill="#dcb050"/>
<rect x="3" y="2.5" width="27" height="5" fill="#fff5a8"/>
<rect x="4" y="6" width="28.5" height="2.5" fill="#d8aa4c"/>
<rect x="3" y="8.5" width="29.5" height="16" fill="url(#fg)"/>
<rect x="0" y="24" width="32.5" height="2.5" fill="#e2b84a"/></svg>
<div class="t " style="left:251.41px;top:985.84px;font-size:25px;line-height:25px;color:#383838;font-weight:normal;transform:scaleX(0.9435);transform-origin:0 0;">Fcon</div>
<div class="t" style="right:2104.5px;top:985.84px;font-size:25px;line-height:25px;color:#383838;text-align:right;">2</div>
<div class="t" style="right:1952px;top:985.84px;font-size:25px;line-height:25px;color:#383838;text-align:right;">0</div>
<div class="t " style="left:999.48px;top:985.84px;font-size:25px;line-height:25px;color:#383838;font-weight:normal;transform:scaleX(1.0211);transform-origin:0 0;">2025-08-25 20:03:11</div>
<div class="a" style="left:42px;top:1016px;width:1219px;height:38px;background:#efefef;"></div>
<div class="a" style="left:4px;top:1016px;width:36px;height:38px;background:#f0f0f0;"></div>
<div class="a" style="left:243px;top:1052px;width:1018px;height:2px;background:#d9d9d9;"></div>
<div class="a" style="left:243px;top:1016px;width:2px;height:38px;background:#d9d9d9;"></div>
<div class="a" style="left:679px;top:1016px;width:2px;height:38px;background:#d9d9d9;"></div>
<div class="a" style="left:837px;top:1016px;width:2px;height:38px;background:#d9d9d9;"></div>
<div class="a" style="left:989px;top:1016px;width:2px;height:38px;background:#d9d9d9;"></div>
<div class="a" style="left:1259px;top:1016px;width:2px;height:38px;background:#d9d9d9;"></div>
<svg class="a" style="left:194px;top:1027px;" width="9" height="16" viewBox="0 0 9 16"><path d="M0 0 L9 8 L0 16 Z" fill="#555"/></svg>
<svg class="a" style="left:210px;top:1024px;" width="33" height="27" viewBox="0 0 33 27"><defs><linearGradient id="fg" x1="0" y1="0" x2="0" y2="1"><stop offset="0" stop-color="#fffbc4"/><stop offset="0.45" stop-color="#f8eca0"/><stop offset="1" stop-color="#f0dc62"/></linearGradient></defs>
<rect x="0" y="2" width="3" height="24" fill="#d9a640"/>
<rect x="2" y="0" width="12" height="2.5" fill="#cf9c45"/>
<rect x="14" y="2" width="16" height="2.5" fill="#dcb050"/>
<rect x="3" y="2.5" width="27" height="5" fill="#fff5a8"/>
<rect x="4" y="6" width="28.5" height="2.5" fill="#d8aa4c"/>
<rect x="3" y="8.5" width="29.5" height="16" fill="url(#fg)"/>
<rect x="0" y="24" width="32.5" height="2.5" fill="#e2b84a"/></svg>
<div class="t " style="left:251.30px;top:1023.84px;font-size:25px;line-height:25px;color:#383838;font-weight:normal;transform:scaleX(1.0022);transform-origin:0 0;">Management Infrastructure</div>
<div class="t" style="right:2104.5px;top:1023.84px;font-size:25px;line-height:25px;color:#383838;text-align:right;">2</div>
<div class="t" style="right:1952px;top:1023.84px;font-size:25px;line-height:25px;color:#383838;text-align:right;">4</div>
<div class="t " style="left:999.49px;top:1023.84px;font-size:25px;line-height:25px;color:#383838;font-weight:normal;transform:scaleX(1.0129);transform-origin:0 0;">2019-12-07 09:17:27</div>
<div class="a" style="left:42px;top:1054px;width:1219px;height:38px;background:#f9f9f9;"></div>
<div class="a" style="left:4px;top:1054px;width:36px;height:38px;background:#f0f0f0;"></div>
<div class="a" style="left:243px;top:1090px;width:1018px;height:2px;background:#d9d9d9;"></div>
<div class="a" style="left:243px;top:1054px;width:2px;height:38px;background:#d9d9d9;"></div>
<div class="a" style="left:679px;top:1054px;width:2px;height:38px;background:#d9d9d9;"></div>
<div class="a" style="left:837px;top:1054px;width:2px;height:38px;background:#d9d9d9;"></div>
<div class="a" style="left:989px;top:1054px;width:2px;height:38px;background:#d9d9d9;"></div>
<div class="a" style="left:1259px;top:1054px;width:2px;height:38px;background:#d9d9d9;"></div>
<svg class="a" style="left:194px;top:1065px;" width="9" height="16" viewBox="0 0 9 16"><path d="M0 0 L9 8 L0 16 Z" fill="#555"/></svg>
<svg class="a" style="left:210px;top:1062px;" width="33" height="27" viewBox="0 0 33 27"><defs><linearGradient id="fg" x1="0" y1="0" x2="0" y2="1"><stop offset="0" stop-color="#fffbc4"/><stop offset="0.45" stop-color="#f8eca0"/><stop offset="1" stop-color="#f0dc62"/></linearGradient></defs>
<rect x="0" y="2" width="3" height="24" fill="#d9a640"/>
<rect x="2" y="0" width="12" height="2.5" fill="#cf9c45"/>
<rect x="14" y="2" width="16" height="2.5" fill="#dcb050"/>
<rect x="3" y="2.5" width="27" height="5" fill="#fff5a8"/>
<rect x="4" y="6" width="28.5" height="2.5" fill="#d8aa4c"/>
<rect x="3" y="8.5" width="29.5" height="16" fill="url(#fg)"/>
<rect x="0" y="24" width="32.5" height="2.5" fill="#e2b84a"/></svg>
<div class="t " style="left:251.32px;top:1061.84px;font-size:25px;line-height:25px;color:#383838;font-weight:normal;transform:scaleX(0.9914);transform-origin:0 0;">PropertySystem</div>
<div class="t" style="right:2104.5px;top:1061.84px;font-size:25px;line-height:25px;color:#383838;text-align:right;">2</div>
<div class="t" style="right:1952px;top:1061.84px;font-size:25px;line-height:25px;color:#383838;text-align:right;">3</div>
<div class="t " style="left:999.49px;top:1061.84px;font-size:25px;line-height:25px;color:#383838;font-weight:normal;transform:scaleX(1.0129);transform-origin:0 0;">2019-12-07 09:17:27</div>
<div class="a" style="left:42px;top:1092px;width:1219px;height:38px;background:#efefef;"></div>
<div class="a" style="left:4px;top:1092px;width:36px;height:38px;background:#f0f0f0;"></div>
<div class="a" style="left:243px;top:1128px;width:1018px;height:2px;background:#d9d9d9;"></div>
<div class="a" style="left:243px;top:1092px;width:2px;height:38px;background:#d9d9d9;"></div>
<div class="a" style="left:679px;top:1092px;width:2px;height:38px;background:#d9d9d9;"></div>
<div class="a" style="left:837px;top:1092px;width:2px;height:38px;background:#d9d9d9;"></div>
<div class="a" style="left:989px;top:1092px;width:2px;height:38px;background:#d9d9d9;"></div>
<div class="a" style="left:1259px;top:1092px;width:2px;height:38px;background:#d9d9d9;"></div>
<svg class="a" style="left:194px;top:1103px;" width="9" height="16" viewBox="0 0 9 16"><path d="M0 0 L9 8 L0 16 Z" fill="#555"/></svg>
<svg class="a" style="left:210px;top:1100px;" width="33" height="27" viewBox="0 0 33 27"><defs><linearGradient id="fg" x1="0" y1="0" x2="0" y2="1"><stop offset="0" stop-color="#fffbc4"/><stop offset="0.45" stop-color="#f8eca0"/><stop offset="1" stop-color="#f0dc62"/></linearGradient></defs>
<rect x="0" y="2" width="3" height="24" fill="#d9a640"/>
<rect x="2" y="0" width="12" height="2.5" fill="#cf9c45"/>
<rect x="14" y="2" width="16" height="2.5" fill="#dcb050"/>
<rect x="3" y="2.5" width="27" height="5" fill="#fff5a8"/>
<rect x="4" y="6" width="28.5" height="2.5" fill="#d8aa4c"/>
<rect x="3" y="8.5" width="29.5" height="16" fill="url(#fg)"/>
<rect x="0" y="24" width="32.5" height="2.5" fill="#e2b84a"/></svg>
<div class="t " style="left:251.51px;top:1099.84px;font-size:25px;line-height:25px;color:#383838;font-weight:normal;transform:scaleX(0.8949);transform-origin:0 0;">Reliability</div>
<div class="t" style="right:2104.5px;top:1099.84px;font-size:25px;line-height:25px;color:#383838;text-align:right;">2</div>
<div class="t" style="right:1952px;top:1099.84px;font-size:25px;line-height:25px;color:#383838;text-align:right;">6</div>
<div class="t " style="left:999.49px;top:1099.84px;font-size:25px;line-height:25px;color:#383838;font-weight:normal;transform:scaleX(1.0129);transform-origin:0 0;">2025-08-25 19:50:25</div>
<div class="a" style="left:42px;top:1130px;width:1219px;height:38px;background:#e5f0fa;"></div>
<div class="a" style="left:4px;top:1130px;width:36px;height:38px;background:#f0f0f0;"></div>
<div class="a" style="left:243px;top:1166px;width:1018px;height:2px;background:#d9d9d9;"></div>
<div class="a" style="left:243px;top:1130px;width:2px;height:38px;background:#d9d9d9;"></div>
<div class="a" style="left:679px;top:1130px;width:2px;height:38px;background:#d9d9d9;"></div>
<div class="a" style="left:837px;top:1130px;width:2px;height:38px;background:#d9d9d9;"></div>
<div class="a" style="left:989px;top:1130px;width:2px;height:38px;background:#d9d9d9;"></div>
<div class="a" style="left:1259px;top:1130px;width:2px;height:38px;background:#d9d9d9;"></div>
<div class="a" style="left:245px;top:1130px;width:433px;height:34px;background:#fff;border:1px dotted #333"></div>
<svg class="a" style="left:20px;top:1141px;" width="9" height="16" viewBox="0 0 9 16"><path d="M0 0 L9 8 L0 16 Z" fill="#555"/></svg>
<svg class="a" style="left:210px;top:1138px;" width="33" height="27" viewBox="0 0 33 27"><defs><linearGradient id="fg" x1="0" y1="0" x2="0" y2="1"><stop offset="0" stop-color="#fffbc4"/><stop offset="0.45" stop-color="#f8eca0"/><stop offset="1" stop-color="#f0dc62"/></linearGradient></defs>
<rect x="0" y="2" width="3" height="24" fill="#d9a640"/>
<rect x="2" y="0" width="12" height="2.5" fill="#cf9c45"/>
<rect x="14" y="2" width="16" height="2.5" fill="#dcb050"/>
<rect x="3" y="2.5" width="27" height="5" fill="#fff5a8"/>
<rect x="4" y="6" width="28.5" height="2.5" fill="#d8aa4c"/>
<rect x="3" y="8.5" width="29.5" height="16" fill="url(#fg)"/>
<rect x="0" y="24" width="32.5" height="2.5" fill="#e2b84a"/></svg>
<div class="t " style="left:252.26px;top:1137.84px;font-size:25px;line-height:25px;color:#383838;font-weight:bold;transform:scaleX(1.0383);transform-origin:0 0;">Run</div>
<div class="t" style="right:2104.5px;top:1137.84px;font-size:25px;line-height:25px;color:#383838;text-align:right;">2</div>
<div class="t" style="right:1952px;top:1137.84px;font-size:25px;line-height:25px;color:#383838;text-align:right;">0</div>
<div class="t " style="left:999.49px;top:1137.84px;font-size:25px;line-height:25px;color:#383838;font-weight:normal;transform:scaleX(1.0129);transform-origin:0 0;">2025-08-15 21:04:47</div>
<div class="a" style="left:42px;top:1168px;width:1219px;height:38px;background:#efefef;"></div>
<div class="a" style="left:4px;top:1168px;width:36px;height:38px;background:#f0f0f0;"></div>
<div class="a" style="left:243px;top:1204px;width:1018px;height:2px;background:#d9d9d9;"></div>
<div class="a" style="left:243px;top:1168px;width:2px;height:38px;background:#d9d9d9;"></div>
<div class="a" style="left:679px;top:1168px;width:2px;height:38px;background:#d9d9d9;"></div>
<div class="a" style="left:837px;top:1168px;width:2px;height:38px;background:#d9d9d9;"></div>
<div class="a" style="left:989px;top:1168px;width:2px;height:38px;background:#d9d9d9;"></div>
<div class="a" style="left:1259px;top:1168px;width:2px;height:38px;background:#d9d9d9;"></div>
<svg class="a" style="left:194px;top:1179px;" width="9" height="16" viewBox="0 0 9 16"><path d="M0 0 L9 8 L0 16 Z" fill="#555"/></svg>
<svg class="a" style="left:210px;top:1176px;" width="33" height="27" viewBox="0 0 33 27"><defs><linearGradient id="fg" x1="0" y1="0" x2="0" y2="1"><stop offset="0" stop-color="#fffbc4"/><stop offset="0.45" stop-color="#f8eca0"/><stop offset="1" stop-color="#f0dc62"/></linearGradient></defs>
<rect x="0" y="2" width="3" height="24" fill="#d9a640"/>
<rect x="2" y="0" width="12" height="2.5" fill="#cf9c45"/>
<rect x="14" y="2" width="16" height="2.5" fill="#dcb050"/>
<rect x="3" y="2.5" width="27" height="5" fill="#fff5a8"/>
<rect x="4" y="6" width="28.5" height="2.5" fill="#d8aa4c"/>
<rect x="3" y="8.5" width="29.5" height="16" fill="url(#fg)"/>
<rect x="0" y="24" width="32.5" height="2.5" fill="#e2b84a"/></svg>
<div class="t " style="left:252.30px;top:1175.84px;font-size:25px;line-height:25px;color:#383838;font-weight:normal;transform:scaleX(1.0011);transform-origin:0 0;">Setup</div>
<div class="t" style="right:2104.5px;top:1175.84px;font-size:25px;line-height:25px;color:#383838;text-align:right;">2</div>
<div class="t" style="right:1952px;top:1175.84px;font-size:25px;line-height:25px;color:#383838;text-align:right;">9</div>
<div class="t " style="left:999.49px;top:1175.84px;font-size:25px;line-height:25px;color:#383838;font-weight:normal;transform:scaleX(1.0129);transform-origin:0 0;">2025-08-14 16:29:23</div>
<div class="a" style="left:42px;top:1206px;width:1219px;height:38px;background:#f9f9f9;"></div>
<div class="a" style="left:4px;top:1206px;width:36px;height:38px;background:#f0f0f0;"></div>
<div class="a" style="left:243px;top:1242px;width:1018px;height:2px;background:#d9d9d9;"></div>
<div class="a" style="left:243px;top:1206px;width:2px;height:38px;background:#d9d9d9;"></div>
<div class="a" style="left:679px;top:1206px;width:2px;height:38px;background:#d9d9d9;"></div>
<div class="a" style="left:837px;top:1206px;width:2px;height:38px;background:#d9d9d9;"></div>
<div class="a" style="left:989px;top:1206px;width:2px;height:38px;background:#d9d9d9;"></div>
<div class="a" style="left:1259px;top:1206px;width:2px;height:38px;background:#d9d9d9;"></div>
<svg class="a" style="left:210px;top:1214px;" width="33" height="27" viewBox="0 0 33 27"><defs><linearGradient id="fg" x1="0" y1="0" x2="0" y2="1"><stop offset="0" stop-color="#fffbc4"/><stop offset="0.45" stop-color="#f8eca0"/><stop offset="1" stop-color="#f0dc62"/></linearGradient></defs>
<rect x="0" y="2" width="3" height="24" fill="#d9a640"/>
<rect x="2" y="0" width="12" height="2.5" fill="#cf9c45"/>
<rect x="14" y="2" width="16" height="2.5" fill="#dcb050"/>
<rect x="3" y="2.5" width="27" height="5" fill="#fff5a8"/>
<rect x="4" y="6" width="28.5" height="2.5" fill="#d8aa4c"/>
<rect x="3" y="8.5" width="29.5" height="16" fill="url(#fg)"/>
<rect x="0" y="24" width="32.5" height="2.5" fill="#e2b84a"/></svg>
<div class="t " style="left:252.37px;top:1213.84px;font-size:25px;line-height:25px;color:#383838;font-weight:normal;transform:scaleX(0.9324);transform-origin:0 0;">SharedAccess</div>
<div class="t" style="right:2104.5px;top:1213.84px;font-size:25px;line-height:25px;color:#383838;text-align:right;">2</div>
<div class="t" style="right:1952px;top:1213.84px;font-size:25px;line-height:25px;color:#383838;text-align:right;">0</div>
<div class="t " style="left:999.49px;top:1213.84px;font-size:25px;line-height:25px;color:#383838;font-weight:normal;transform:scaleX(1.0129);transform-origin:0 0;">2019-12-07 09:17:27</div>
<div class="a" style="left:42px;top:1244px;width:1219px;height:38px;background:#efefef;"></div>
<div class="a" style="left:4px;top:1244px;width:36px;height:38px;background:#f0f0f0;"></div>
<div class="a" style="left:243px;top:1280px;width:1018px;height:2px;background:#d9d9d9;"></div>
<div class="a" style="left:243px;top:1244px;width:2px;height:38px;background:#d9d9d9;"></div>
<div class="a" style="left:679px;top:1244px;width:2px;height:38px;background:#d9d9d9;"></div>
<div class="a" style="left:837px;top:1244px;width:2px;height:38px;background:#d9d9d9;"></div>
<div class="a" style="left:989px;top:1244px;width:2px;height:38px;background:#d9d9d9;"></div>
<div class="a" style="left:1259px;top:1244px;width:2px;height:38px;background:#d9d9d9;"></div>
<svg class="a" style="left:210px;top:1252px;" width="33" height="27" viewBox="0 0 33 27"><defs><linearGradient id="fg" x1="0" y1="0" x2="0" y2="1"><stop offset="0" stop-color="#fffbc4"/><stop offset="0.45" stop-color="#f8eca0"/><stop offset="1" stop-color="#f0dc62"/></linearGradient></defs>
<rect x="0" y="2" width="3" height="24" fill="#d9a640"/>
<rect x="2" y="0" width="12" height="2.5" fill="#cf9c45"/>
<rect x="14" y="2" width="16" height="2.5" fill="#dcb050"/>
<rect x="3" y="2.5" width="27" height="5" fill="#fff5a8"/>
<rect x="4" y="6" width="28.5" height="2.5" fill="#d8aa4c"/>
<rect x="3" y="8.5" width="29.5" height="16" fill="url(#fg)"/>
<rect x="0" y="24" width="32.5" height="2.5" fill="#e2b84a"/></svg>
<div class="t " style="left:252.37px;top:1251.84px;font-size:25px;line-height:25px;color:#383838;font-weight:normal;transform:scaleX(0.9319);transform-origin:0 0;">Utilman</div>
<div class="t" style="right:2104.5px;top:1251.84px;font-size:25px;line-height:25px;color:#383838;text-align:right;">2</div>
<div class="t" style="right:1952px;top:1251.84px;font-size:25px;line-height:25px;color:#383838;text-align:right;">0</div>
<div class="t " style="left:999.49px;top:1251.84px;font-size:25px;line-height:25px;color:#383838;font-weight:normal;transform:scaleX(1.0129);transform-origin:0 0;">2025-04-21 17:46:12</div>
<div class="a" style="left:42px;top:1282px;width:1219px;height:38px;background:#f9f9f9;"></div>
<div class="a" style="left:4px;top:1282px;width:36px;height:38px;background:#f0f0f0;"></div>
<div class="a" style="left:243px;top:1318px;width:1018px;height:2px;background:#d9d9d9;"></div>
<div class="a" style="left:243px;top:1282px;width:2px;height:38px;background:#d9d9d9;"></div>
<div class="a" style="left:679px;top:1282px;width:2px;height:38px;background:#d9d9d9;"></div>
<div class="a" style="left:837px;top:1282px;width:2px;height:38px;background:#d9d9d9;"></div>
<div class="a" style="left:989px;top:1282px;width:2px;height:38px;background:#d9d9d9;"></div>
<div class="a" style="left:1259px;top:1282px;width:2px;height:38px;background:#d9d9d9;"></div>
<svg class="a" style="left:210px;top:1290px;" width="33" height="27" viewBox="0 0 33 27"><defs><linearGradient id="fg" x1="0" y1="0" x2="0" y2="1"><stop offset="0" stop-color="#fffbc4"/><stop offset="0.45" stop-color="#f8eca0"/><stop offset="1" stop-color="#f0dc62"/></linearGradient></defs>
<rect x="0" y="2" width="3" height="24" fill="#d9a640"/>
<rect x="2" y="0" width="12" height="2.5" fill="#cf9c45"/>
<rect x="14" y="2" width="16" height="2.5" fill="#dcb050"/>
<rect x="3" y="2.5" width="27" height="5" fill="#fff5a8"/>
<rect x="4" y="6" width="28.5" height="2.5" fill="#d8aa4c"/>
<rect x="3" y="8.5" width="29.5" height="16" fill="url(#fg)"/>
<rect x="0" y="24" width="32.5" height="2.5" fill="#e2b84a"/></svg>
<div class="t " style="left:253.30px;top:1289.84px;font-size:25px;line-height:25px;color:#383838;font-weight:normal;transform:scaleX(0.9557);transform-origin:0 0;">WebCheck</div>
<div class="t" style="right:2104.5px;top:1289.84px;font-size:25px;line-height:25px;color:#383838;text-align:right;">2</div>
<div class="t" style="right:1952px;top:1289.84px;font-size:25px;line-height:25px;color:#383838;text-align:right;">0</div>
<div class="t " style="left:999.49px;top:1289.84px;font-size:25px;line-height:25px;color:#383838;font-weight:normal;transform:scaleX(1.0129);transform-origin:0 0;">2019-12-07 09:17:28</div>
<div class="a" style="left:42px;top:1320px;width:1219px;height:38px;background:#efefef;"></div>
<div class="a" style="left:4px;top:1320px;width:36px;height:38px;background:#f0f0f0;"></div>
<div class="a" style="left:243px;top:1356px;width:1018px;height:2px;background:#d9d9d9;"></div>
<div class="a" style="left:243px;top:1320px;width:2px;height:38px;background:#d9d9d9;"></div>
<div class="a" style="left:679px;top:1320px;width:2px;height:38px;background:#d9d9d9;"></div>
<div class="a" style="left:837px;top:1320px;width:2px;height:38px;background:#d9d9d9;"></div>
<div class="a" style="left:989px;top:1320px;width:2px;height:38px;background:#d9d9d9;"></div>
<div class="a" style="left:1259px;top:1320px;width:2px;height:38px;background:#d9d9d9;"></div>
<svg class="a" style="left:210px;top:1328px;" width="33" height="27" viewBox="0 0 33 27"><defs><linearGradient id="fg" x1="0" y1="0" x2="0" y2="1"><stop offset="0" stop-color="#fffbc4"/><stop offset="0.45" stop-color="#f8eca0"/><stop offset="1" stop-color="#f0dc62"/></linearGradient></defs>
<rect x="0" y="2" width="3" height="24" fill="#d9a640"/>
<rect x="2" y="0" width="12" height="2.5" fill="#cf9c45"/>
<rect x="14" y="2" width="16" height="2.5" fill="#dcb050"/>
<rect x="3" y="2.5" width="27" height="5" fill="#fff5a8"/>
<rect x="4" y="6" width="28.5" height="2.5" fill="#d8aa4c"/>
<rect x="3" y="8.5" width="29.5" height="16" fill="url(#fg)"/>
<rect x="0" y="24" width="32.5" height="2.5" fill="#e2b84a"/></svg>
<div class="t " style="left:253.30px;top:1327.84px;font-size:25px;line-height:25px;color:#383838;font-weight:normal;transform:scaleX(0.9572);transform-origin:0 0;">Windows Block Level Backup</div>
<div class="t" style="right:2104.5px;top:1327.84px;font-size:25px;line-height:25px;color:#383838;text-align:right;">2</div>
<div class="t" style="right:1952px;top:1327.84px;font-size:25px;line-height:25px;color:#383838;text-align:right;">0</div>
<div class="t " style="left:999.49px;top:1327.84px;font-size:25px;line-height:25px;color:#383838;font-weight:normal;transform:scaleX(1.0129);transform-origin:0 0;">2019-12-07 09:17:28</div>
<div class="a" style="left:42px;top:1358px;width:1219px;height:38px;background:#f9f9f9;"></div>
<div class="a" style="left:4px;top:1358px;width:36px;height:38px;background:#f0f0f0;"></div>
<div class="a" style="left:243px;top:1394px;width:1018px;height:2px;background:#d9d9d9;"></div>
<div class="a" style="left:243px;top:1358px;width:2px;height:38px;background:#d9d9d9;"></div>
<div class="a" style="left:679px;top:1358px;width:2px;height:38px;background:#d9d9d9;"></div>
<div class="a" style="left:837px;top:1358px;width:2px;height:38px;background:#d9d9d9;"></div>
<div class="a" style="left:989px;top:1358px;width:2px;height:38px;background:#d9d9d9;"></div>
<div class="a" style="left:1259px;top:1358px;width:2px;height:38px;background:#d9d9d9;"></div>
<svg class="a" style="left:210px;top:1366px;" width="33" height="27" viewBox="0 0 33 27"><defs><linearGradient id="fg" x1="0" y1="0" x2="0" y2="1"><stop offset="0" stop-color="#fffbc4"/><stop offset="0.45" stop-color="#f8eca0"/><stop offset="1" stop-color="#f0dc62"/></linearGradient></defs>
<rect x="0" y="2" width="3" height="24" fill="#d9a640"/>
<rect x="2" y="0" width="12" height="2.5" fill="#cf9c45"/>
<rect x="14" y="2" width="16" height="2.5" fill="#dcb050"/>
<rect x="3" y="2.5" width="27" height="5" fill="#fff5a8"/>
<rect x="4" y="6" width="28.5" height="2.5" fill="#d8aa4c"/>
<rect x="3" y="8.5" width="29.5" height="16" fill="url(#fg)"/>
<rect x="0" y="24" width="32.5" height="2.5" fill="#e2b84a"/></svg>
<div class="t " style="left:253.30px;top:1365.84px;font-size:25px;line-height:25px;color:#383838;font-weight:normal;transform:scaleX(0.9997);transform-origin:0 0;">AutoRotation</div>
<div class="t" style="right:2104.5px;top:1365.84px;font-size:25px;line-height:25px;color:#383838;text-align:right;">3</div>
<div class="t" style="right:1952px;top:1365.84px;font-size:25px;line-height:25px;color:#383838;text-align:right;">0</div>
<div class="t " style="left:999.49px;top:1365.84px;font-size:25px;line-height:25px;color:#383838;font-weight:normal;transform:scaleX(1.0129);transform-origin:0 0;">2025-08-25 19:52:38</div>
<div class="a" style="left:42px;top:1396px;width:1219px;height:38px;background:#efefef;"></div>
<div class="a" style="left:4px;top:1396px;width:36px;height:38px;background:#f0f0f0;"></div>
<div class="a" style="left:243px;top:1432px;width:1018px;height:2px;background:#d9d9d9;"></div>
<div class="a" style="left:243px;top:1396px;width:2px;height:38px;background:#d9d9d9;"></div>
<div class="a" style="left:679px;top:1396px;width:2px;height:38px;background:#d9d9d9;"></div>
<div class="a" style="left:837px;top:1396px;width:2px;height:38px;background:#d9d9d9;"></div>
<div class="a" style="left:989px;top:1396px;width:2px;height:38px;background:#d9d9d9;"></div>
<div class="a" style="left:1259px;top:1396px;width:2px;height:38px;background:#d9d9d9;"></div>
<svg class="a" style="left:210px;top:1404px;" width="33" height="27" viewBox="0 0 33 27"><defs><linearGradient id="fg" x1="0" y1="0" x2="0" y2="1"><stop offset="0" stop-color="#fffbc4"/><stop offset="0.45" stop-color="#f8eca0"/><stop offset="1" stop-color="#f0dc62"/></linearGradient></defs>
<rect x="0" y="2" width="3" height="24" fill="#d9a640"/>
<rect x="2" y="0" width="12" height="2.5" fill="#cf9c45"/>
<rect x="14" y="2" width="16" height="2.5" fill="#dcb050"/>
<rect x="3" y="2.5" width="27" height="5" fill="#fff5a8"/>
<rect x="4" y="6" width="28.5" height="2.5" fill="#d8aa4c"/>
<rect x="3" y="8.5" width="29.5" height="16" fill="url(#fg)"/>
<rect x="0" y="24" width="32.5" height="2.5" fill="#e2b84a"/></svg>
<div class="t " style="left:252.35px;top:1403.84px;font-size:25px;line-height:25px;color:#383838;font-weight:normal;transform:scaleX(0.9463);transform-origin:0 0;">SecureAssessment</div>
<div class="t" style="right:2104.5px;top:1403.84px;font-size:25px;line-height:25px;color:#383838;text-align:right;">3</div>
<div class="t" style="right:1952px;top:1403.84px;font-size:25px;line-height:25px;color:#383838;text-align:right;">0</div>
<div class="t " style="left:999.49px;top:1403.84px;font-size:25px;line-height:25px;color:#383838;font-weight:normal;transform:scaleX(1.0129);transform-origin:0 0;">2019-12-07 09:54:03</div>
<div class="a" style="left:42px;top:1434px;width:1219px;height:38px;background:#f9f9f9;"></div>
<div class="a" style="left:4px;top:1434px;width:36px;height:38px;background:#f0f0f0;"></div>
<div class="a" style="left:243px;top:1470px;width:1018px;height:2px;background:#d9d9d9;"></div>
<div class="a" style="left:243px;top:1434px;width:2px;height:38px;background:#d9d9d9;"></div>
<div class="a" style="left:679px;top:1434px;width:2px;height:38px;background:#d9d9d9;"></div>
<div class="a" style="left:837px;top:1434px;width:2px;height:38px;background:#d9d9d9;"></div>
<div class="a" style="left:989px;top:1434px;width:2px;height:38px;background:#d9d9d9;"></div>
<div class="a" style="left:1259px;top:1434px;width:2px;height:38px;background:#d9d9d9;"></div>
<svg class="a" style="left:210px;top:1442px;" width="33" height="27" viewBox="0 0 33 27"><defs><linearGradient id="fg" x1="0" y1="0" x2="0" y2="1"><stop offset="0" stop-color="#fffbc4"/><stop offset="0.45" stop-color="#f8eca0"/><stop offset="1" stop-color="#f0dc62"/></linearGradient></defs>
<rect x="0" y="2" width="3" height="24" fill="#d9a640"/>
<rect x="2" y="0" width="12" height="2.5" fill="#cf9c45"/>
<rect x="14" y="2" width="16" height="2.5" fill="#dcb050"/>
<rect x="3" y="2.5" width="27" height="5" fill="#fff5a8"/>
<rect x="4" y="6" width="28.5" height="2.5" fill="#d8aa4c"/>
<rect x="3" y="8.5" width="29.5" height="16" fill="url(#fg)"/>
<rect x="0" y="24" width="32.5" height="2.5" fill="#e2b84a"/></svg>
<div class="t " style="left:252.37px;top:1441.84px;font-size:25px;line-height:25px;color:#383838;font-weight:normal;transform:scaleX(0.9259);transform-origin:0 0;">SHUTDOWN</div>
<div class="t" style="right:2104.5px;top:1441.84px;font-size:25px;line-height:25px;color:#383838;text-align:right;">3</div>
<div class="t" style="right:1952px;top:1441.84px;font-size:25px;line-height:25px;color:#383838;text-align:right;">0</div>
<div class="t " style="left:999.49px;top:1441.84px;font-size:25px;line-height:25px;color:#383838;font-weight:normal;transform:scaleX(1.0129);transform-origin:0 0;">2025-08-24 23:20:07</div>
<div class="a" style="left:42px;top:1472px;width:1219px;height:38px;background:#efefef;"></div>
<div class="a" style="left:4px;top:1472px;width:36px;height:38px;background:#f0f0f0;"></div>
<div class="a" style="left:243px;top:1508px;width:1018px;height:2px;background:#d9d9d9;"></div>
<div class="a" style="left:243px;top:1472px;width:2px;height:38px;background:#d9d9d9;"></div>
<div class="a" style="left:679px;top:1472px;width:2px;height:38px;background:#d9d9d9;"></div>
<div class="a" style="left:837px;top:1472px;width:2px;height:38px;background:#d9d9d9;"></div>
<div class="a" style="left:989px;top:1472px;width:2px;height:38px;background:#d9d9d9;"></div>
<div class="a" style="left:1259px;top:1472px;width:2px;height:38px;background:#d9d9d9;"></div>
<svg class="a" style="left:194px;top:1483px;" width="9" height="16" viewBox="0 0 9 16"><path d="M0 0 L9 8 L0 16 Z" fill="#555"/></svg>
<svg class="a" style="left:210px;top:1480px;" width="33" height="27" viewBox="0 0 33 27"><defs><linearGradient id="fg" x1="0" y1="0" x2="0" y2="1"><stop offset="0" stop-color="#fffbc4"/><stop offset="0.45" stop-color="#f8eca0"/><stop offset="1" stop-color="#f0dc62"/></linearGradient></defs>
<rect x="0" y="2" width="3" height="24" fill="#d9a640"/>
<rect x="2" y="0" width="12" height="2.5" fill="#cf9c45"/>
<rect x="14" y="2" width="16" height="2.5" fill="#dcb050"/>
<rect x="3" y="2.5" width="27" height="5" fill="#fff5a8"/>
<rect x="4" y="6" width="28.5" height="2.5" fill="#d8aa4c"/>
<rect x="3" y="8.5" width="29.5" height="16" fill="url(#fg)"/>
<rect x="0" y="24" width="32.5" height="2.5" fill="#e2b84a"/></svg>
<div class="t " style="left:253.30px;top:1479.84px;font-size:25px;line-height:25px;color:#383838;font-weight:normal;transform:scaleX(0.9064);transform-origin:0 0;">WSMAN</div>
<div class="t" style="right:2104.5px;top:1479.84px;font-size:25px;line-height:25px;color:#383838;text-align:right;">3</div>
<div class="t" style="right:1952px;top:1479.84px;font-size:25px;line-height:25px;color:#383838;text-align:right;">8</div>
<div class="t " style="left:999.49px;top:1479.84px;font-size:25px;line-height:25px;color:#383838;font-weight:normal;transform:scaleX(1.0129);transform-origin:0 0;">2025-04-21 10:48:46</div>
<div class="a" style="left:42px;top:1510px;width:1219px;height:38px;background:#f9f9f9;"></div>
<div class="a" style="left:4px;top:1510px;width:36px;height:38px;background:#f0f0f0;"></div>
<div class="a" style="left:243px;top:1546px;width:1018px;height:2px;background:#d9d9d9;"></div>
<div class="a" style="left:243px;top:1510px;width:2px;height:38px;background:#d9d9d9;"></div>
<div class="a" style="left:679px;top:1510px;width:2px;height:38px;background:#d9d9d9;"></div>
<div class="a" style="left:837px;top:1510px;width:2px;height:38px;background:#d9d9d9;"></div>
<div class="a" style="left:989px;top:1510px;width:2px;height:38px;background:#d9d9d9;"></div>
<div class="a" style="left:1259px;top:1510px;width:2px;height:38px;background:#d9d9d9;"></div>
<svg class="a" style="left:194px;top:1521px;" width="9" height="16" viewBox="0 0 9 16"><path d="M0 0 L9 8 L0 16 Z" fill="#555"/></svg>
<svg class="a" style="left:210px;top:1518px;" width="33" height="27" viewBox="0 0 33 27"><defs><linearGradient id="fg" x1="0" y1="0" x2="0" y2="1"><stop offset="0" stop-color="#fffbc4"/><stop offset="0.45" stop-color="#f8eca0"/><stop offset="1" stop-color="#f0dc62"/></linearGradient></defs>
<rect x="0" y="2" width="3" height="24" fill="#d9a640"/>
<rect x="2" y="0" width="12" height="2.5" fill="#cf9c45"/>
<rect x="14" y="2" width="16" height="2.5" fill="#dcb050"/>
<rect x="3" y="2.5" width="27" height="5" fill="#fff5a8"/>
<rect x="4" y="6" width="28.5" height="2.5" fill="#d8aa4c"/>
<rect x="3" y="8.5" width="29.5" height="16" fill="url(#fg)"/>
<rect x="0" y="24" width="32.5" height="2.5" fill="#e2b84a"/></svg>
<div class="t " style="left:251.36px;top:1517.84px;font-size:25px;line-height:25px;color:#383838;font-weight:normal;transform:scaleX(0.9694);transform-origin:0 0;">Installer</div>
<div class="t" style="right:2104.5px;top:1517.84px;font-size:25px;line-height:25px;color:#383838;text-align:right;">4</div>
<div class="t" style="right:1952px;top:1517.84px;font-size:25px;line-height:25px;color:#383838;text-align:right;">4</div>
<div class="t " style="left:999.49px;top:1517.84px;font-size:25px;line-height:25px;color:#383838;font-weight:normal;transform:scaleX(1.0129);transform-origin:0 0;">2025-04-21 17:45:16</div>
<div class="a" style="left:42px;top:1548px;width:1219px;height:38px;background:#efefef;"></div>
<div class="a" style="left:4px;top:1548px;width:36px;height:38px;background:#f0f0f0;"></div>
<div class="a" style="left:243px;top:1584px;width:1018px;height:2px;background:#d9d9d9;"></div>
<div class="a" style="left:243px;top:1548px;width:2px;height:38px;background:#d9d9d9;"></div>
<div class="a" style="left:679px;top:1548px;width:2px;height:38px;background:#d9d9d9;"></div>
<div class="a" style="left:837px;top:1548px;width:2px;height:38px;background:#d9d9d9;"></div>
<div class="a" style="left:989px;top:1548px;width:2px;height:38px;background:#d9d9d9;"></div>
<div class="a" style="left:1259px;top:1548px;width:2px;height:38px;background:#d9d9d9;"></div>
<svg class="a" style="left:210px;top:1556px;" width="33" height="27" viewBox="0 0 33 27"><defs><linearGradient id="fg" x1="0" y1="0" x2="0" y2="1"><stop offset="0" stop-color="#fffbc4"/><stop offset="0.45" stop-color="#f8eca0"/><stop offset="1" stop-color="#f0dc62"/></linearGradient></defs>
<rect x="0" y="2" width="3" height="24" fill="#d9a640"/>
<rect x="2" y="0" width="12" height="2.5" fill="#cf9c45"/>
<rect x="14" y="2" width="16" height="2.5" fill="#dcb050"/>
<rect x="3" y="2.5" width="27" height="5" fill="#fff5a8"/>
<rect x="4" y="6" width="28.5" height="2.5" fill="#d8aa4c"/>
<rect x="3" y="8.5" width="29.5" height="16" fill="url(#fg)"/>
<rect x="0" y="24" width="32.5" height="2.5" fill="#e2b84a"/></svg>
<div class="t " style="left:251.38px;top:1555.84px;font-size:25px;line-height:25px;color:#383838;font-weight:normal;transform:scaleX(0.9617);transform-origin:0 0;">PerceptionSimulationExtensions</div>
<div class="t" style="right:2104.5px;top:1555.84px;font-size:25px;line-height:25px;color:#383838;text-align:right;">4</div>
<div class="t" style="right:1952px;top:1555.84px;font-size:25px;line-height:25px;color:#383838;text-align:right;">0</div>
<div class="t " style="left:999.49px;top:1555.84px;font-size:25px;line-height:25px;color:#383838;font-weight:normal;transform:scaleX(1.0129);transform-origin:0 0;">2019-12-07 09:17:27</div>
<div class="a" style="left:42px;top:1586px;width:1219px;height:38px;background:#f9f9f9;"></div>
<div class="a" style="left:4px;top:1586px;width:36px;height:38px;background:#f0f0f0;"></div>
<div class="a" style="left:243px;top:1622px;width:1018px;height:2px;background:#d9d9d9;"></div>
<div class="a" style="left:243px;top:1586px;width:2px;height:38px;background:#d9d9d9;"></div>
<div class="a" style="left:679px;top:1586px;width:2px;height:38px;background:#d9d9d9;"></div>
<div class="a" style="left:837px;top:1586px;width:2px;height:38px;background:#d9d9d9;"></div>
<div class="a" style="left:989px;top:1586px;width:2px;height:38px;background:#d9d9d9;"></div>
<div class="a" style="left:1259px;top:1586px;width:2px;height:38px;background:#d9d9d9;"></div>
<svg class="a" style="left:194px;top:1597px;" width="9" height="16" viewBox="0 0 9 16"><path d="M0 0 L9 8 L0 16 Z" fill="#555"/></svg>
<svg class="a" style="left:210px;top:1594px;" width="33" height="27" viewBox="0 0 33 27"><defs><linearGradient id="fg" x1="0" y1="0" x2="0" y2="1"><stop offset="0" stop-color="#fffbc4"/><stop offset="0.45" stop-color="#f8eca0"/><stop offset="1" stop-color="#f0dc62"/></linearGradient></defs>
<rect x="0" y="2" width="3" height="24" fill="#d9a640"/>
<rect x="2" y="0" width="12" height="2.5" fill="#cf9c45"/>
<rect x="14" y="2" width="16" height="2.5" fill="#dcb050"/>
<rect x="3" y="2.5" width="27" height="5" fill="#fff5a8"/>
<rect x="4" y="6" width="28.5" height="2.5" fill="#d8aa4c"/>
<rect x="3" y="8.5" width="29.5" height="16" fill="url(#fg)"/>
<rect x="0" y="24" width="32.5" height="2.5" fill="#e2b84a"/></svg>
<div class="t " style="left:252.39px;top:1593.84px;font-size:25px;line-height:25px;color:#383838;font-weight:normal;transform:scaleX(0.9078);transform-origin:0 0;">SideBySide</div>
<div class="t" style="right:2104.5px;top:1593.84px;font-size:25px;line-height:25px;color:#383838;text-align:right;">4</div>
<div class="t" style="right:1952px;top:1593.84px;font-size:25px;line-height:25px;color:#383838;text-align:right;">3</div>
<div class="t " style="left:999.49px;top:1593.84px;font-size:25px;line-height:25px;color:#383838;font-weight:normal;transform:scaleX(1.0129);transform-origin:0 0;">2025-08-14 16:29:52</div>
<div class="a" style="left:42px;top:1624px;width:1219px;height:38px;background:#efefef;"></div>
<div class="a" style="left:4px;top:1624px;width:36px;height:38px;background:#f0f0f0;"></div>
<div class="a" style="left:243px;top:1660px;width:1018px;height:2px;background:#d9d9d9;"></div>
<div class="a" style="left:243px;top:1624px;width:2px;height:38px;background:#d9d9d9;"></div>
<div class="a" style="left:679px;top:1624px;width:2px;height:38px;background:#d9d9d9;"></div>
<div class="a" style="left:837px;top:1624px;width:2px;height:38px;background:#d9d9d9;"></div>
<div class="a" style="left:989px;top:1624px;width:2px;height:38px;background:#d9d9d9;"></div>
<div class="a" style="left:1259px;top:1624px;width:2px;height:38px;background:#d9d9d9;"></div>
<svg class="a" style="left:194px;top:1635px;" width="9" height="16" viewBox="0 0 9 16"><path d="M0 0 L9 8 L0 16 Z" fill="#555"/></svg>
<svg class="a" style="left:210px;top:1632px;" width="33" height="27" viewBox="0 0 33 27"><defs><linearGradient id="fg" x1="0" y1="0" x2="0" y2="1"><stop offset="0" stop-color="#fffbc4"/><stop offset="0.45" stop-color="#f8eca0"/><stop offset="1" stop-color="#f0dc62"/></linearGradient></defs>
<rect x="0" y="2" width="3" height="24" fill="#d9a640"/>
<rect x="2" y="0" width="12" height="2.5" fill="#cf9c45"/>
<rect x="14" y="2" width="16" height="2.5" fill="#dcb050"/>
<rect x="3" y="2.5" width="27" height="5" fill="#fff5a8"/>
<rect x="4" y="6" width="28.5" height="2.5" fill="#d8aa4c"/>
<rect x="3" y="8.5" width="29.5" height="16" fill="url(#fg)"/>
<rect x="0" y="24" width="32.5" height="2.5" fill="#e2b84a"/></svg>
<div class="t " style="left:251.19px;top:1631.84px;font-size:25px;line-height:25px;color:#383838;font-weight:normal;transform:scaleX(1.0543);transform-origin:0 0;">Internet Settings</div>
<div class="t" style="right:2104.5px;top:1631.84px;font-size:25px;line-height:25px;color:#383838;text-align:right;">5</div>
<div class="t" style="right:1952px;top:1631.84px;font-size:25px;line-height:25px;color:#383838;text-align:right;">28</div>
<div class="t " style="left:999.49px;top:1631.84px;font-size:25px;line-height:25px;color:#383838;font-weight:normal;transform:scaleX(1.0129);transform-origin:0 0;">2025-04-21 18:42:07</div>
<div class="a" style="left:1566px;top:292px;width:34px;height:1372px;background:#e9e9e9;"></div>
<svg class="a" style="left:1575px;top:301px;" width="16" height="14" viewBox="0 0 16 14"><path d="M1 12 L8 4 L15 12" fill="none" stroke="#606060" stroke-width="3.2"/></svg>
<svg class="a" style="left:1575px;top:1640px;" width="16" height="14" viewBox="0 0 16 14"><path d="M1 2 L8 10 L15 2" fill="none" stroke="#606060" stroke-width="3.2"/></svg>
<div class="a" style="left:1566px;top:1156px;width:34px;height:103px;background:#cdcdcd;"></div>
<div class="a" style="left:1614px;top:868px;width:4px;height:4px;background:#3c3c3c;"></div>
<div class="a" style="left:1614px;top:876px;width:4px;height:4px;background:#3c3c3c;"></div>
<div class="a" style="left:1614px;top:884px;width:4px;height:4px;background:#3c3c3c;"></div>
<div class="a" style="left:1614px;top:892px;width:4px;height:4px;background:#3c3c3c;"></div>
<div class="a" style="left:1629px;top:105px;width:114px;height:46px;border:2px solid #adadad;border-bottom:none;background:#f0f0f0"></div>
<div class="t " style="left:1652.80px;top:114.84px;font-size:25px;line-height:25px;color:#383838;font-weight:normal;transform:scaleX(0.9341);transform-origin:0 0;">Values</div>
<div class="a" style="left:1629px;top:149px;width:1304px;height:801px;border:3px solid #a9a9a9;border-right:1px solid #a9a9a9;background:#fff"></div>
<div class="a" style="left:1632px;top:152px;width:1303px;height:67px;background:#f3f3f3;"></div>
<div class="t " style="left:1639.98px;top:174.84px;font-size:25px;line-height:25px;color:#bdb8c0;font-weight:normal;transform:scaleX(1.0082);transform-origin:0 0;">Drag a column header here to group by that column</div>
<svg class="a" style="left:2880px;top:166px;" width="44" height="44" viewBox="0 0 44 44"><circle cx="29" cy="14" r="10" fill="none" stroke="#333" stroke-width="3"/><path d="M22 21 L6 37" stroke="#333" stroke-width="3.4"/></svg>
<div class="a" style="left:1632px;top:218px;width:1303px;height:2px;background:#a9a9a9;"></div>
<div class="a" style="left:1632px;top:220px;width:1303px;height:40px;background:#efefef;"></div>
<div class="a" style="left:1632px;top:260px;width:1303px;height:2px;background:#a9a9a9;"></div>
<div class="a" style="left:1667px;top:220px;width:2px;height:40px;background:#a9a9a9;"></div>
<div class="a" style="left:1919px;top:220px;width:2px;height:40px;background:#a9a9a9;"></div>
<div class="a" style="left:2083px;top:220px;width:2px;height:40px;background:#a9a9a9;"></div>
<div class="a" style="left:2204px;top:220px;width:2px;height:40px;background:#a9a9a9;"></div>
<div class="a" style="left:2370px;top:220px;width:2px;height:40px;background:#a9a9a9;"></div>
<div class="a" style="left:2420px;top:220px;width:2px;height:40px;background:#a9a9a9;"></div>
<div class="t " style="left:1678.30px;top:226.84px;font-size:25px;line-height:25px;color:#383838;font-weight:normal;transform:scaleX(0.9546);transform-origin:0 0;">Value Name</div>
<svg class="a" style="left:1894px;top:234px;" width="18" height="12" viewBox="0 0 18 12"><path d="M0 11 L9 1 L18 11 Z" fill="#595959"/></svg>
<div class="t " style="left:1931.00px;top:226.84px;font-size:25px;line-height:25px;color:#383838;font-weight:normal;transform:scaleX(0.9924);transform-origin:0 0;">Value Type</div>
<div class="t " style="left:2091.79px;top:226.84px;font-size:25px;line-height:25px;color:#383838;font-weight:normal;transform:scaleX(0.9528);transform-origin:0 0;">Data</div>
<div class="t " style="left:2216.40px;top:226.84px;font-size:25px;line-height:25px;color:#383838;font-weight:normal;transform:scaleX(0.9230);transform-origin:0 0;">Value Slack</div>
<div class="t " style="left:2380.20px;top:226.84px;font-size:25px;line-height:25px;color:#383838;font-weight:normal;transform:scaleX(1.0991);transform-origin:0 0;">I...</div>
<div class="t " style="left:2430.49px;top:226.84px;font-size:25px;line-height:25px;color:#383838;font-weight:normal;transform:scaleX(0.9536);transform-origin:0 0;">Data Record Reallocated</div>
<div class="a" style="left:1632px;top:262px;width:35px;height:40px;background:#f0f0f0;"></div>
<div class="a" style="left:1632px;top:302px;width:1303px;height:2px;background:#a9a9a9;"></div>
<div class="a" style="left:1667px;top:262px;width:2px;height:40px;background:#a9a9a9;"></div>
<div class="a" style="left:1919px;top:262px;width:2px;height:40px;background:#dcdcdc;"></div>
<div class="a" style="left:2083px;top:262px;width:2px;height:40px;background:#dcdcdc;"></div>
<div class="a" style="left:2204px;top:262px;width:2px;height:40px;background:#dcdcdc;"></div>
<div class="a" style="left:2370px;top:262px;width:2px;height:40px;background:#dcdcdc;"></div>
<div class="a" style="left:2420px;top:262px;width:2px;height:40px;background:#dcdcdc;"></div>
<svg class="a" style="left:1645px;top:274px;" width="12" height="16" viewBox="0 0 12 16"><ellipse cx="6" cy="4" rx="5" ry="3" fill="none" stroke="#555" stroke-width="2.4"/><path d="M2 6 L10 6 L7 11 L7 15 L5 15 L5 11 Z" fill="#555"/></svg>
<svg class="a" style="left:1682px;top:272px;" width="32" height="23" viewBox="0 0 32 23"><path d="M1 17 V8 Q1 6 3.5 6 Q6 6 6 8 V17 M1 12 H6" fill="none" stroke="#555" stroke-width="1.8"/><rect x="8" y="0" width="14" height="22" rx="2" fill="#6e9f8c"/><rect x="11" y="5" width="8" height="12" fill="#fff"/><circle cx="15" cy="9" r="1.6" fill="#6e9f8c"/><circle cx="15" cy="13" r="1.6" fill="#6e9f8c"/><path d="M30 7 H26 Q24.5 7 24.5 8.5 V14.5 Q24.5 16 26 16 H30" fill="none" stroke="#555" stroke-width="1.8"/></svg>
<svg class="a" style="left:1933px;top:272px;" width="32" height="23" viewBox="0 0 32 23"><path d="M1 17 V8 Q1 6 3.5 6 Q6 6 6 8 V17 M1 12 H6" fill="none" stroke="#555" stroke-width="1.8"/><rect x="8" y="0" width="14" height="22" rx="2" fill="#6e9f8c"/><rect x="11" y="5" width="8" height="12" fill="#fff"/><circle cx="15" cy="9" r="1.6" fill="#6e9f8c"/><circle cx="15" cy="13" r="1.6" fill="#6e9f8c"/><path d="M30 7 H26 Q24.5 7 24.5 8.5 V14.5 Q24.5 16 26 16 H30" fill="none" stroke="#555" stroke-width="1.8"/></svg>
<svg class="a" style="left:2097px;top:272px;" width="32" height="23" viewBox="0 0 32 23"><path d="M1 17 V8 Q1 6 3.5 6 Q6 6 6 8 V17 M1 12 H6" fill="none" stroke="#555" stroke-width="1.8"/><rect x="8" y="0" width="14" height="22" rx="2" fill="#6e9f8c"/><rect x="11" y="5" width="8" height="12" fill="#fff"/><circle cx="15" cy="9" r="1.6" fill="#6e9f8c"/><circle cx="15" cy="13" r="1.6" fill="#6e9f8c"/><path d="M30 7 H26 Q24.5 7 24.5 8.5 V14.5 Q24.5 16 26 16 H30" fill="none" stroke="#555" stroke-width="1.8"/></svg>
<svg class="a" style="left:2218px;top:272px;" width="32" height="23" viewBox="0 0 32 23"><path d="M1 17 V8 Q1 6 3.5 6 Q6 6 6 8 V17 M1 12 H6" fill="none" stroke="#555" stroke-width="1.8"/><rect x="8" y="0" width="14" height="22" rx="2" fill="#6e9f8c"/><rect x="11" y="5" width="8" height="12" fill="#fff"/><circle cx="15" cy="9" r="1.6" fill="#6e9f8c"/><circle cx="15" cy="13" r="1.6" fill="#6e9f8c"/><path d="M30 7 H26 Q24.5 7 24.5 8.5 V14.5 Q24.5 16 26 16 H30" fill="none" stroke="#555" stroke-width="1.8"/></svg>
<svg class="a" style="left:2386px;top:269px;" width="26" height="26" viewBox="0 0 26 26"><rect x="1" y="1" width="24" height="24" fill="#fff" stroke="#9c9c9c" stroke-width="2"/><rect x="6" y="6" width="13" height="13" fill="#5f5f5f"/></svg>
<svg class="a" style="left:2668px;top:269px;" width="26" height="26" viewBox="0 0 26 26"><rect x="1" y="1" width="24" height="24" fill="#fff" stroke="#9c9c9c" stroke-width="2"/><rect x="6" y="6" width="13" height="13" fill="#5f5f5f"/></svg>
<div class="a" style="left:1632px;top:304px;width:35px;height:42px;background:#f0f0f0;"></div>
<div class="a" style="left:1669px;top:304px;width:1266px;height:42px;background:#efefef;"></div>
<div class="a" style="left:2085px;top:304px;width:121px;height:40px;background:#fff;"></div>
<div class="a" style="left:1669px;top:344px;width:1266px;height:2px;background:#dcdcdc;"></div>
<div class="a" style="left:1667px;top:304px;width:2px;height:42px;background:#a9a9a9;"></div>
<div class="a" style="left:1919px;top:304px;width:2px;height:42px;background:#dcdcdc;"></div>
<div class="a" style="left:2083px;top:304px;width:2px;height:42px;background:#dcdcdc;"></div>
<div class="a" style="left:2204px;top:304px;width:2px;height:42px;background:#dcdcdc;"></div>
<div class="a" style="left:2370px;top:304px;width:2px;height:42px;background:#dcdcdc;"></div>
<div class="a" style="left:2420px;top:304px;width:2px;height:42px;background:#dcdcdc;"></div>
<div class="t " style="left:1678.53px;top:311.84px;font-size:25px;line-height:25px;color:#383838;font-weight:normal;transform:scaleX(0.9678);transform-origin:0 0;">SecurityHealth</div>
<div class="t " style="left:1929.18px;top:311.84px;font-size:25px;line-height:25px;color:#383838;font-weight:normal;transform:scaleX(0.9102);transform-origin:0 0;">RegExpandSz</div>
<div class="t " style="left:2095.00px;top:311.84px;font-size:25px;line-height:25px;color:#383838;font-weight:normal;transform:scaleX(0.9889);transform-origin:0 0;">%windi...</div>
<div class="t " style="left:2216.40px;top:311.84px;font-size:25px;line-height:25px;color:#383838;font-weight:normal;transform:scaleX(0.9911);transform-origin:0 0;">00-00-00-00</div>
<svg class="a" style="left:2386px;top:310px;" width="26" height="26" viewBox="0 0 26 26"><rect x="1" y="1" width="24" height="24" fill="#fff" stroke="#9c9c9c" stroke-width="2"/></svg>
<svg class="a" style="left:2668px;top:310px;" width="26" height="26" viewBox="0 0 26 26"><rect x="1" y="1" width="24" height="24" fill="#fff" stroke="#9c9c9c" stroke-width="2"/></svg>
<div class="a" style="left:1632px;top:346px;width:35px;height:42px;background:#f0f0f0;"></div>
<div class="a" style="left:1669px;top:346px;width:1266px;height:42px;background:#f9f9f9;"></div>
<div class="a" style="left:1669px;top:386px;width:1266px;height:2px;background:#dcdcdc;"></div>
<div class="a" style="left:1667px;top:346px;width:2px;height:42px;background:#a9a9a9;"></div>
<div class="a" style="left:1919px;top:346px;width:2px;height:42px;background:#dcdcdc;"></div>
<div class="a" style="left:2083px;top:346px;width:2px;height:42px;background:#dcdcdc;"></div>
<div class="a" style="left:2204px;top:346px;width:2px;height:42px;background:#dcdcdc;"></div>
<div class="a" style="left:2370px;top:346px;width:2px;height:42px;background:#dcdcdc;"></div>
<div class="a" style="left:2420px;top:346px;width:2px;height:42px;background:#dcdcdc;"></div>
<div class="t " style="left:1679.50px;top:353.84px;font-size:25px;line-height:25px;color:#383838;font-weight:normal;transform:scaleX(0.9348);transform-origin:0 0;">VMware User Process</div>
<div class="t " style="left:1929.23px;top:353.84px;font-size:25px;line-height:25px;color:#383838;font-weight:normal;transform:scaleX(0.8864);transform-origin:0 0;">RegSz</div>
<div class="t " style="left:2094.03px;top:353.84px;font-size:25px;line-height:25px;color:#383838;font-weight:normal;transform:scaleX(0.9691);transform-origin:0 0;">&quot;C:\Pro...</div>
<div class="t " style="left:2216.40px;top:353.84px;font-size:25px;line-height:25px;color:#383838;font-weight:normal;transform:scaleX(0.9772);transform-origin:0 0;">00-00</div>
<svg class="a" style="left:2386px;top:352px;" width="26" height="26" viewBox="0 0 26 26"><rect x="1" y="1" width="24" height="24" fill="#fff" stroke="#9c9c9c" stroke-width="2"/></svg>
<svg class="a" style="left:2668px;top:352px;" width="26" height="26" viewBox="0 0 26 26"><rect x="1" y="1" width="24" height="24" fill="#fff" stroke="#9c9c9c" stroke-width="2"/></svg>
<svg class="a" style="left:1648px;top:318px;" width="9" height="16" viewBox="0 0 9 16"><path d="M0 0 L9 8 L0 16 Z" fill="#555"/></svg>
<div class="a" style="left:2266px;top:968px;width:4px;height:4px;background:#404040;"></div>
<div class="a" style="left:2274px;top:968px;width:4px;height:4px;background:#404040;"></div>
<div class="a" style="left:2282px;top:968px;width:4px;height:4px;background:#404040;"></div>
<div class="a" style="left:2290px;top:968px;width:4px;height:4px;background:#404040;"></div>
<div class="a" style="left:2298px;top:968px;width:4px;height:4px;background:#404040;"></div>
<div class="a" style="left:1629px;top:987px;width:182px;height:44px;border-top:2px solid #c4c4c4;border-left:2px solid #c4c4c4;border-right:2px solid #c4c4c4;background:#f0f0f0;box-sizing:border-box"></div>
<div class="t " style="left:1653.70px;top:996.84px;font-size:25px;line-height:25px;color:#383838;font-weight:normal;transform:scaleX(1.0108);transform-origin:0 0;">Type viewer</div>
<div class="t " style="left:1831.04px;top:996.84px;font-size:25px;line-height:25px;color:#383838;font-weight:normal;transform:scaleX(0.9590);transform-origin:0 0;">Slack viewer</div>
<div class="t " style="left:2008.05px;top:996.84px;font-size:25px;line-height:25px;color:#383838;font-weight:normal;transform:scaleX(0.9728);transform-origin:0 0;">Binary viewer</div>
<div class="a" style="left:1629px;top:1029px;width:1307px;height:638px;border-left:2px solid #c0c0c0;border-bottom:2px solid #b8b8b8;background:#f0f0f0;box-sizing:border-box"></div>
<div class="a" style="left:1809px;top:1029px;width:1127px;height:2px;background:#c4c4c4;"></div>
<div class="a" style="left:1826px;top:1038px;width:1093px;height:56px;border-top:4px solid #6e6e6e;border-left:4px solid #6e6e6e;border-bottom:2px solid #ffffff;border-right:2px solid #ffffff;box-sizing:border-box;background:#f0f0f0;box-shadow:inset 1px 1px 0 #fbfbfb, inset -1px -1px 0 #e2e2e2"></div>
<div class="a" style="left:1826px;top:1104px;width:1093px;height:56px;border-top:4px solid #6e6e6e;border-left:4px solid #6e6e6e;border-bottom:2px solid #ffffff;border-right:2px solid #ffffff;box-sizing:border-box;background:#f0f0f0;box-shadow:inset 1px 1px 0 #fbfbfb, inset -1px -1px 0 #e2e2e2"></div>
<div class="a" style="left:1826px;top:1168px;width:1093px;height:309px;border-top:4px solid #6e6e6e;border-left:4px solid #6e6e6e;border-bottom:2px solid #ffffff;border-right:2px solid #ffffff;box-sizing:border-box;background:#f0f0f0;box-shadow:inset 1px 1px 0 #fbfbfb, inset -1px -1px 0 #e2e2e2"></div>
<div class="a" style="left:1826px;top:1484px;width:1093px;height:104px;border-top:4px solid #6e6e6e;border-left:4px solid #6e6e6e;border-bottom:2px solid #ffffff;border-right:2px solid #ffffff;box-sizing:border-box;background:#f0f0f0;box-shadow:inset 1px 1px 0 #fbfbfb, inset -1px -1px 0 #e2e2e2"></div>
<div class="a" style="left:1826px;top:1600px;width:1093px;height:56px;border-top:4px solid #6e6e6e;border-left:4px solid #6e6e6e;border-bottom:2px solid #ffffff;border-right:2px solid #ffffff;box-sizing:border-box;background:#f0f0f0;box-shadow:inset 1px 1px 0 #fbfbfb, inset -1px -1px 0 #e2e2e2"></div>
<div class="t " style="left:1641.00px;top:1046.84px;font-size:25px;line-height:25px;color:#404040;font-weight:normal;transform:scaleX(0.9643);transform-origin:0 0;">Value name</div>
<div class="t " style="left:1641.00px;top:1111.84px;font-size:25px;line-height:25px;color:#404040;font-weight:normal;transform:scaleX(1.0054);transform-origin:0 0;">Value type</div>
<div class="t " style="left:1641.00px;top:1178.84px;font-size:25px;line-height:25px;color:#404040;font-weight:normal;transform:scaleX(0.9480);transform-origin:0 0;">Value</div>
<div class="t " style="left:1642.71px;top:1492.84px;font-size:25px;line-height:25px;color:#404040;font-weight:normal;transform:scaleX(0.9454);transform-origin:0 0;">Raw value</div>
<div class="t " style="left:1643.73px;top:1608.84px;font-size:25px;line-height:25px;color:#404040;font-weight:normal;transform:scaleX(0.8741);transform-origin:0 0;">Slack</div>
<div class="t " style="left:1831.53px;top:1050.84px;font-size:25px;line-height:25px;color:#000;font-weight:normal;transform:scaleX(0.9678);transform-origin:0 0;">SecurityHealth</div>
<div class="t " style="left:1830.65px;top:1116.84px;font-size:25px;line-height:25px;color:#000;font-weight:normal;transform:scaleX(0.9248);transform-origin:0 0;">RegExpandSz</div>
<div class="t " style="left:1833.00px;top:1179.84px;font-size:25px;line-height:25px;color:#000;font-weight:normal;transform:scaleX(0.9943);transform-origin:0 0;">%windir%\system32\SecurityHealthSystray.exe</div>
<div class="a" style="left:1829px;top:1488px;width:1052px;height:95px;overflow:hidden">
<div class="t " style="left:3.01px;top:8.84px;font-size:25px;line-height:25px;color:#000;font-weight:normal;transform:scaleX(0.9874);transform-origin:0 0;">25-00-77-00-69-00-6E-00-64-00-69-00-72-00-25-00-5C-00-73-00-79-00-73-00-74-00-65-00-6D-</div>
<div class="t " style="left:4.00px;top:44.54000000000005px;font-size:25px;line-height:25px;color:#000;font-weight:normal;transform:scaleX(0.9917);transform-origin:0 0;">00-33-00-32-00-5C-00-53-00-65-00-63-00-75-00-72-00-69-00-74-00-79-00-48-00-65-00-61-00-</div>
<div class="t " style="left:3.01px;top:80.2400000000001px;font-size:25px;line-height:25px;color:#000;font-weight:normal;transform:scaleX(0.9888);transform-origin:0 0;">6C-00-74-00-68-00-53-00-79-00-73-00-74-00-72-00-61-00-79-00-2E-00-65-00-78-00-65-00-00-</div>
</div>
<div class="a" style="left:2882px;top:1488px;width:35px;height:96px;background:#f0f0f0;"></div>
<div class="a" style="left:2881px;top:1488px;width:1px;height:96px;background:#fafafa;"></div>
<svg class="a" style="left:2890px;top:1498px;" width="16" height="14" viewBox="0 0 16 14"><path d="M1 12 L8 4 L15 12" fill="none" stroke="#606060" stroke-width="3"/></svg>
<svg class="a" style="left:2890px;top:1562px;" width="16" height="14" viewBox="0 0 16 14"><path d="M1 2 L8 10 L15 2" fill="none" stroke="#606060" stroke-width="3"/></svg>
<div class="t " style="left:1832.50px;top:1611.84px;font-size:25px;line-height:25px;color:#000;font-weight:normal;transform:scaleX(0.9852);transform-origin:0 0;">00-00-00-00</div>
<svg class="a" style="left:2398px;top:1603px;" width="72" height="32" viewBox="0 0 72 32"><path d="M1 0.5 L3 1" transform="translate(0,0) scale(3.4,3.0)" fill="none" stroke="#b0b0b0" stroke-width="0.5882352941176471" vector-effect="non-scaling-stroke"/><path d="M1 1.6 H4.5 V4 H1.2" transform="translate(0,0) scale(3.4,3.0)" fill="none" stroke="#b0b0b0" stroke-width="0.5882352941176471" vector-effect="non-scaling-stroke"/><path d="M1.2 1.6 V4.5 Q1.2 8 0.3 9.8" transform="translate(0,0) scale(3.4,3.0)" fill="none" stroke="#b0b0b0" stroke-width="0.5882352941176471" vector-effect="non-scaling-stroke"/><path d="M2.2 6 H4.5 V9 H2.2 Z" transform="translate(0,0) scale(3.4,3.0)" fill="none" stroke="#b0b0b0" stroke-width="0.5882352941176471" vector-effect="non-scaling-stroke"/><path d="M6.6 0.3 L5.6 3.5" transform="translate(0,0) scale(3.4,3.0)" fill="none" stroke="#b0b0b0" stroke-width="0.5882352941176471" vector-effect="non-scaling-stroke"/><path d="M6 2 H9.6" transform="translate(0,0) scale(3.4,3.0)" fill="none" stroke="#b0b0b0" stroke-width="0.5882352941176471" vector-effect="non-scaling-stroke"/><path d="M9.2 2 Q8 7 5.8 9.8" transform="translate(0,0) scale(3.4,3.0)" fill="none" stroke="#b0b0b0" stroke-width="0.5882352941176471" vector-effect="non-scaling-stroke"/><path d="M6.6 4.2 Q8 8 9.8 9.6" transform="translate(0,0) scale(3.4,3.0)" fill="none" stroke="#b0b0b0" stroke-width="0.5882352941176471" vector-effect="non-scaling-stroke"/><path d="M1.2 1 V6.5 Q1.2 9 0.2 9.9" transform="translate(34,0) scale(3.4,3.0)" fill="none" stroke="#b0b0b0" stroke-width="0.5882352941176471" vector-effect="non-scaling-stroke"/><path d="M1.2 1 H9 V9.6 H8" transform="translate(34,0) scale(3.4,3.0)" fill="none" stroke="#b0b0b0" stroke-width="0.5882352941176471" vector-effect="non-scaling-stroke"/><path d="M5 1 V9.9" transform="translate(34,0) scale(3.4,3.0)" fill="none" stroke="#b0b0b0" stroke-width="0.5882352941176471" vector-effect="non-scaling-stroke"/><path d="M1.2 3.9 H9" transform="translate(34,0) scale(3.4,3.0)" fill="none" stroke="#b0b0b0" stroke-width="0.5882352941176471" vector-effect="non-scaling-stroke"/><path d="M1.2 6.7 H9" transform="translate(34,0) scale(3.4,3.0)" fill="none" stroke="#b0b0b0" stroke-width="0.5882352941176471" vector-effect="non-scaling-stroke"/></svg>
<div class="t " style="left:2490.30px;top:1602.8px;font-size:34.5px;line-height:34.5px;color:#c6c6c6;font-weight:normal;transform:scaleX(1.2199);transform-origin:0 0;">Windows</div>
<svg class="a" style="left:2398px;top:1648px;" width="260" height="28" viewBox="0 0 260 28"></svg>
<svg class="a" style="left:2398px;top:1648px;" width="246" height="27" viewBox="0 0 246 27"><path d="M3.8 0.3 L0.6 1.4" transform="translate(0,0) scale(2.5,2.5)" fill="none" stroke="#b0b0b0" stroke-width="0.72" vector-effect="non-scaling-stroke"/><path d="M0.4 3 H4.5" transform="translate(0,0) scale(2.5,2.5)" fill="none" stroke="#b0b0b0" stroke-width="0.72" vector-effect="non-scaling-stroke"/><path d="M2.5 1 V10" transform="translate(0,0) scale(2.5,2.5)" fill="none" stroke="#b0b0b0" stroke-width="0.72" vector-effect="non-scaling-stroke"/><path d="M2.5 3.6 L0.3 7.6" transform="translate(0,0) scale(2.5,2.5)" fill="none" stroke="#b0b0b0" stroke-width="0.72" vector-effect="non-scaling-stroke"/><path d="M2.6 4.2 L4.5 6" transform="translate(0,0) scale(2.5,2.5)" fill="none" stroke="#b0b0b0" stroke-width="0.72" vector-effect="non-scaling-stroke"/><path d="M6.5 0.3 L5 3" transform="translate(0,0) scale(2.5,2.5)" fill="none" stroke="#b0b0b0" stroke-width="0.72" vector-effect="non-scaling-stroke"/><path d="M6 1.2 H9.5 L5.8 5" transform="translate(0,0) scale(2.5,2.5)" fill="none" stroke="#b0b0b0" stroke-width="0.72" vector-effect="non-scaling-stroke"/><path d="M7 3 L8 4" transform="translate(0,0) scale(2.5,2.5)" fill="none" stroke="#b0b0b0" stroke-width="0.72" vector-effect="non-scaling-stroke"/><path d="M7 5.5 L5.5 8" transform="translate(0,0) scale(2.5,2.5)" fill="none" stroke="#b0b0b0" stroke-width="0.72" vector-effect="non-scaling-stroke"/><path d="M6.6 6.5 H9.8 L5.5 10" transform="translate(0,0) scale(2.5,2.5)" fill="none" stroke="#b0b0b0" stroke-width="0.72" vector-effect="non-scaling-stroke"/><path d="M7 8 L8 9" transform="translate(0,0) scale(2.5,2.5)" fill="none" stroke="#b0b0b0" stroke-width="0.72" vector-effect="non-scaling-stroke"/><path d="M1 1 H9" transform="translate(30,0) scale(2.5,2.5)" fill="none" stroke="#b0b0b0" stroke-width="0.72" vector-effect="non-scaling-stroke"/><path d="M5 1 L1.5 5 L8.8 4.6" transform="translate(30,0) scale(2.5,2.5)" fill="none" stroke="#b0b0b0" stroke-width="0.72" vector-effect="non-scaling-stroke"/><path d="M7 3.5 L8.6 5" transform="translate(30,0) scale(2.5,2.5)" fill="none" stroke="#b0b0b0" stroke-width="0.72" vector-effect="non-scaling-stroke"/><path d="M1.6 7 H8.4" transform="translate(30,0) scale(2.5,2.5)" fill="none" stroke="#b0b0b0" stroke-width="0.72" vector-effect="non-scaling-stroke"/><path d="M5 5 V9.5" transform="translate(30,0) scale(2.5,2.5)" fill="none" stroke="#b0b0b0" stroke-width="0.72" vector-effect="non-scaling-stroke"/><path d="M0.3 9.5 H9.7" transform="translate(30,0) scale(2.5,2.5)" fill="none" stroke="#b0b0b0" stroke-width="0.72" vector-effect="non-scaling-stroke"/><path d="M3 0 H1 V10 H3" transform="translate(70,0) scale(2.5,2.5)" fill="none" stroke="#b0b0b0" stroke-width="0.72" vector-effect="non-scaling-stroke"/><path d="M1 0.5 L3 1" transform="translate(78,0) scale(2.5,2.5)" fill="none" stroke="#b0b0b0" stroke-width="0.72" vector-effect="non-scaling-stroke"/><path d="M0.3 2 H4.2" transform="translate(78,0) scale(2.5,2.5)" fill="none" stroke="#b0b0b0" stroke-width="0.72" vector-effect="non-scaling-stroke"/><path d="M1 3.5 H3.5" transform="translate(78,0) scale(2.5,2.5)" fill="none" stroke="#b0b0b0" stroke-width="0.72" vector-effect="non-scaling-stroke"/><path d="M1 5 H3.5" transform="translate(78,0) scale(2.5,2.5)" fill="none" stroke="#b0b0b0" stroke-width="0.72" vector-effect="non-scaling-stroke"/><path d="M1 6.5 H3.5 V9.5 H1 Z" transform="translate(78,0) scale(2.5,2.5)" fill="none" stroke="#b0b0b0" stroke-width="0.72" vector-effect="non-scaling-stroke"/><path d="M6 0.8 V3 L5 4" transform="translate(78,0) scale(2.5,2.5)" fill="none" stroke="#b0b0b0" stroke-width="0.72" vector-effect="non-scaling-stroke"/><path d="M6 0.8 H8.5 V3 H9.6" transform="translate(78,0) scale(2.5,2.5)" fill="none" stroke="#b0b0b0" stroke-width="0.72" vector-effect="non-scaling-stroke"/><path d="M5.5 5 H9 L5.5 9.8" transform="translate(78,0) scale(2.5,2.5)" fill="none" stroke="#b0b0b0" stroke-width="0.72" vector-effect="non-scaling-stroke"/><path d="M6.5 6 L9.8 9.8" transform="translate(78,0) scale(2.5,2.5)" fill="none" stroke="#b0b0b0" stroke-width="0.72" vector-effect="non-scaling-stroke"/><path d="M5 0 V1.5" transform="translate(108,0) scale(2.5,2.5)" fill="none" stroke="#b0b0b0" stroke-width="0.72" vector-effect="non-scaling-stroke"/><path d="M0.5 3.5 V1.5 H9.5 V3.5" transform="translate(108,0) scale(2.5,2.5)" fill="none" stroke="#b0b0b0" stroke-width="0.72" vector-effect="non-scaling-stroke"/><path d="M2 4 H8" transform="translate(108,0) scale(2.5,2.5)" fill="none" stroke="#b0b0b0" stroke-width="0.72" vector-effect="non-scaling-stroke"/><path d="M5 4 V8.5" transform="translate(108,0) scale(2.5,2.5)" fill="none" stroke="#b0b0b0" stroke-width="0.72" vector-effect="non-scaling-stroke"/><path d="M5 6.2 H7.5" transform="translate(108,0) scale(2.5,2.5)" fill="none" stroke="#b0b0b0" stroke-width="0.72" vector-effect="non-scaling-stroke"/><path d="M2.5 5.5 V8 L1 10" transform="translate(108,0) scale(2.5,2.5)" fill="none" stroke="#b0b0b0" stroke-width="0.72" vector-effect="non-scaling-stroke"/><path d="M2.5 8.5 Q5 9.6 9.8 9.8" transform="translate(108,0) scale(2.5,2.5)" fill="none" stroke="#b0b0b0" stroke-width="0.72" vector-effect="non-scaling-stroke"/><path d="M0 0 H2 V10 H0" transform="translate(135,0) scale(2.5,2.5)" fill="none" stroke="#b0b0b0" stroke-width="0.72" vector-effect="non-scaling-stroke"/><path d="M1.5 1 V8 L4.5 6.5" transform="translate(156,0) scale(2.5,2.5)" fill="none" stroke="#b0b0b0" stroke-width="0.72" vector-effect="non-scaling-stroke"/><path d="M3.2 2.5 L4.5 4.5" transform="translate(156,0) scale(2.5,2.5)" fill="none" stroke="#b0b0b0" stroke-width="0.72" vector-effect="non-scaling-stroke"/><path d="M8 0.5 Q7.8 6 4 10" transform="translate(156,0) scale(2.5,2.5)" fill="none" stroke="#b0b0b0" stroke-width="0.72" vector-effect="non-scaling-stroke"/><path d="M6.8 6 L9.8 10" transform="translate(156,0) scale(2.5,2.5)" fill="none" stroke="#b0b0b0" stroke-width="0.72" vector-effect="non-scaling-stroke"/><path d="M1 0.5 L3 1" transform="translate(188,0) scale(2.5,2.5)" fill="none" stroke="#b0b0b0" stroke-width="0.72" vector-effect="non-scaling-stroke"/><path d="M1 1.6 H4.5 V4 H1.2" transform="translate(188,0) scale(2.5,2.5)" fill="none" stroke="#b0b0b0" stroke-width="0.72" vector-effect="non-scaling-stroke"/><path d="M1.2 1.6 V4.5 Q1.2 8 0.3 9.8" transform="translate(188,0) scale(2.5,2.5)" fill="none" stroke="#b0b0b0" stroke-width="0.72" vector-effect="non-scaling-stroke"/><path d="M2.2 6 H4.5 V9 H2.2 Z" transform="translate(188,0) scale(2.5,2.5)" fill="none" stroke="#b0b0b0" stroke-width="0.72" vector-effect="non-scaling-stroke"/><path d="M6.6 0.3 L5.6 3.5" transform="translate(188,0) scale(2.5,2.5)" fill="none" stroke="#b0b0b0" stroke-width="0.72" vector-effect="non-scaling-stroke"/><path d="M6 2 H9.6" transform="translate(188,0) scale(2.5,2.5)" fill="none" stroke="#b0b0b0" stroke-width="0.72" vector-effect="non-scaling-stroke"/><path d="M9.2 2 Q8 7 5.8 9.8" transform="translate(188,0) scale(2.5,2.5)" fill="none" stroke="#b0b0b0" stroke-width="0.72" vector-effect="non-scaling-stroke"/><path d="M6.6 4.2 Q8 8 9.8 9.6" transform="translate(188,0) scale(2.5,2.5)" fill="none" stroke="#b0b0b0" stroke-width="0.72" vector-effect="non-scaling-stroke"/><path d="M1.2 1 V6.5 Q1.2 9 0.2 9.9" transform="translate(215,0) scale(2.5,2.5)" fill="none" stroke="#b0b0b0" stroke-width="0.72" vector-effect="non-scaling-stroke"/><path d="M1.2 1 H9 V9.6 H8" transform="translate(215,0) scale(2.5,2.5)" fill="none" stroke="#b0b0b0" stroke-width="0.72" vector-effect="non-scaling-stroke"/><path d="M5 1 V9.9" transform="translate(215,0) scale(2.5,2.5)" fill="none" stroke="#b0b0b0" stroke-width="0.72" vector-effect="non-scaling-stroke"/><path d="M1.2 3.9 H9" transform="translate(215,0) scale(2.5,2.5)" fill="none" stroke="#b0b0b0" stroke-width="0.72" vector-effect="non-scaling-stroke"/><path d="M1.2 6.7 H9" transform="translate(215,0) scale(2.5,2.5)" fill="none" stroke="#b0b0b0" stroke-width="0.72" vector-effect="non-scaling-stroke"/></svg>
<svg class="a" style="left:2792px;top:1656px;" width="10" height="10" viewBox="0 0 10 10"><circle cx="4.6" cy="4.6" r="2.8" fill="none" stroke="#b8b8b8" stroke-width="1.5"/></svg>
<div class="t " style="left:2649.60px;top:1646.03px;font-size:29.5px;line-height:29.5px;color:#c6c6c6;font-weight:normal;transform:scaleX(1.0940);transform-origin:0 0;">Windows</div>
<div class="a" style="left:0px;top:1720px;width:2936px;height:2px;background:#bdbdbd;"></div>
<div class="a" style="left:14px;top:1680px;width:24px;height:24px;border:2px solid #8a8a8a;background:#fff;box-sizing:border-box"></div>
<div class="a" style="left:65px;top:1674px;width:2px;height:40px;background:#cfcfcf;"></div>
<div class="a" style="left:159px;top:1674px;width:2px;height:40px;background:#cfcfcf;"></div>
<div class="a" style="left:2408px;top:1674px;width:2px;height:40px;background:#cfcfcf;"></div>
<div class="a" style="left:2520px;top:1674px;width:2px;height:40px;background:#cfcfcf;"></div>
<div class="a" style="left:2724px;top:1674px;width:2px;height:40px;background:#cfcfcf;"></div>
<div class="t " style="left:87.40px;top:1679.84px;font-size:25px;line-height:25px;color:#333;font-weight:normal;transform:scaleX(0.9484);transform-origin:0 0;">Key:</div>
<div class="t " style="left:174.92px;top:1679.84px;font-size:25px;line-height:25px;color:#333;font-weight:normal;transform:scaleX(1.0395);transform-origin:0 0;">Microsoft\Windows\CurrentVersion\Run</div>
<div class="t " style="left:2425.90px;top:1679.84px;font-size:25px;line-height:25px;color:#333;font-weight:normal;transform:scaleX(1.0300);transform-origin:0 0;">Value:</div>
<div class="t " style="left:2537.71px;top:1679.84px;font-size:25px;line-height:25px;color:#333;font-weight:normal;transform:scaleX(0.9933);transform-origin:0 0;">SecurityHealth</div>
<div class="t " style="left:2733.21px;top:1679.84px;font-size:25px;line-height:25px;color:#333;font-weight:normal;transform:scaleX(0.9863);transform-origin:0 0;">Collapse all hives</div>
<div class="a" style="left:403px;top:1722px;width:2px;height:40px;background:#cfcfcf;"></div>
<div class="a" style="left:555px;top:1722px;width:2px;height:40px;background:#cfcfcf;"></div>
<div class="a" style="left:831px;top:1722px;width:2px;height:40px;background:#cfcfcf;"></div>
<div class="a" style="left:1211px;top:1722px;width:2px;height:40px;background:#cfcfcf;"></div>
<div class="a" style="left:2677px;top:1722px;width:2px;height:40px;background:#cfcfcf;"></div>
<div class="a" style="left:2883px;top:1722px;width:2px;height:40px;background:#cfcfcf;"></div>
<div class="t " style="left:16.65px;top:1727.84px;font-size:25px;line-height:25px;color:#333;font-weight:normal;transform:scaleX(0.9546);transform-origin:0 0;">Selected hive: SOFTWARE_clean</div>
<div class="t " style="left:419.46px;top:1727.84px;font-size:25px;line-height:25px;color:#333;font-weight:normal;transform:scaleX(0.9692);transform-origin:0 0;">Last write:</div>
<div class="t " style="left:572.39px;top:1727.84px;font-size:25px;line-height:25px;color:#333;font-weight:normal;transform:scaleX(1.0077);transform-origin:0 0;">2025-08-15 21:04:47</div>
<div class="t " style="left:848.02px;top:1727.84px;font-size:25px;line-height:25px;color:#333;font-weight:normal;transform:scaleX(0.9843);transform-origin:0 0;">2 of 2 values shown (100.00%)</div>
<div class="t " style="left:1227.00px;top:1727.84px;font-size:25px;line-height:25px;color:#333;font-weight:normal;transform:scaleX(1.0017);transform-origin:0 0;">Selected bookmark &#x27;Run&#x27; (Run key)</div>
<div class="t " style="left:2692.51px;top:1727.84px;font-size:25px;line-height:25px;color:#333;font-weight:normal;transform:scaleX(0.9965);transform-origin:0 0;">Hidden keys: 0</div>
<div class="t " style="left:2899px;top:1727.84px;font-size:25px;line-height:25px;color:#333;font-weight:normal;">6</div>
<div class="a" style="left:0px;top:1763px;width:2936px;height:1px;background:#7a6070;"></div>
</body></html>
